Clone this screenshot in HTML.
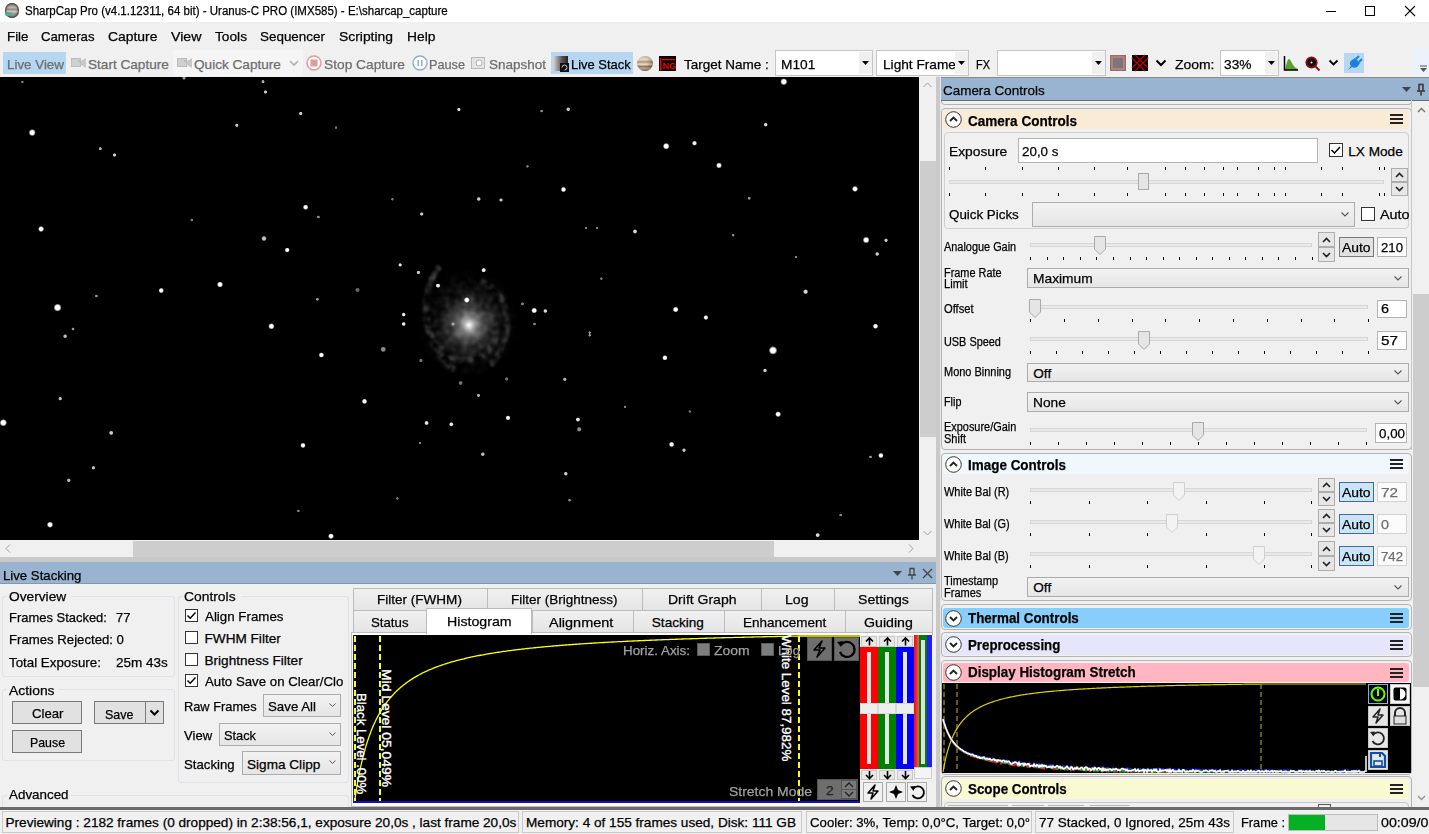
<!DOCTYPE html>
<html><head><meta charset="utf-8">
<style>
*{box-sizing:border-box;margin:0;padding:0}
html,body{width:1429px;height:834px;overflow:hidden;background:#f0f0f0;font-family:"Liberation Sans",sans-serif;color:#000;position:relative}
.a{position:absolute}
.t{position:absolute;white-space:nowrap;line-height:1;-webkit-text-stroke:0.25px currentColor}
svg{overflow:visible}
</style></head><body>
<div class="a" style="left:0px;top:0px;width:1429px;height:22px;background:#fff"></div>
<div class="a" style="left:4.5px;top:3px;width:14.5px;height:14.5px;border-radius:50%;background:linear-gradient(180deg,#8a8580 0%,#b9b4ae 30%,#9c8a78 45%,#c9ccd4 55%,#a89c8e 70%,#8a8078 100%);box-shadow:inset 0 0 2px 1px #3a3530"></div>
<div class="a" style="left:5px;top:12px;width:7px;height:4px;background:#3fb0a0;border-radius:2px;opacity:.9"></div>
<div class="t" style="left:25.0px;top:5.12px;font-size:12.5px;color:#000;transform:scaleX(0.921);transform-origin:0 0;">SharpCap Pro (v4.1.12311, 64 bit) - Uranus-C PRO (IMX585) - E:\sharcap_capture</div>
<div class="a" style="left:1326px;top:11px;width:10px;height:1px;background:#000"></div>
<div class="a" style="left:1365px;top:6px;width:10px;height:10px;border:1px solid #000"></div>
<svg class="a" style="left:1404px;top:5px" width="12" height="12"><path d="M1 1L11 11M11 1L1 11" stroke="#000" stroke-width="1.1"/></svg>
<div class="t" style="left:6.5px;top:30.39px;font-size:13.6px;color:#000;transform:scaleX(0.981);transform-origin:0 0;">File</div>
<div class="t" style="left:40.5px;top:30.39px;font-size:13.6px;color:#000;transform:scaleX(0.970);transform-origin:0 0;">Cameras</div>
<div class="t" style="left:107.5px;top:30.39px;font-size:13.6px;color:#000;transform:scaleX(1.023);transform-origin:0 0;">Capture</div>
<div class="t" style="left:170.5px;top:30.39px;font-size:13.6px;color:#000;transform:scaleX(1.043);transform-origin:0 0;">View</div>
<div class="t" style="left:214.5px;top:30.39px;font-size:13.6px;color:#000;transform:scaleX(1.008);transform-origin:0 0;">Tools</div>
<div class="t" style="left:260.0px;top:30.39px;font-size:13.6px;color:#000;transform:scaleX(0.988);transform-origin:0 0;">Sequencer</div>
<div class="t" style="left:338.5px;top:30.39px;font-size:13.6px;color:#000;transform:scaleX(1.021);transform-origin:0 0;">Scripting</div>
<div class="t" style="left:407.3px;top:30.39px;font-size:13.6px;color:#000;transform:scaleX(1.015);transform-origin:0 0;">Help</div>
<div class="a" style="left:3px;top:52px;width:63px;height:22px;background:#b6d6f2"></div>
<div class="t" style="left:7.0px;top:57.89px;font-size:13.6px;color:#6d6d6d;transform:scaleX(0.983);transform-origin:0 0;">Live View</div>
<div class="a" style="left:71px;top:58px;width:10px;height:9px;background:#d0d0d0;border:1px solid #bdbdbd"></div>
<svg class="a" style="left:81px;top:58px" width="6" height="10"><path d="M0 3L5 0V10L0 7Z" fill="#c8c8c8"/></svg>
<div class="a" style="left:78px;top:60px;width:2px;height:2px;background:#9fd49f"></div>
<div class="t" style="left:88.0px;top:57.89px;font-size:13.6px;color:#6d6d6d;">Start Capture</div>
<div class="a" style="left:173px;top:50px;width:130px;height:26px;background:#f5f5f5"></div>
<div class="a" style="left:177px;top:58px;width:10px;height:9px;background:#d0d0d0;border:1px solid #bdbdbd"></div>
<svg class="a" style="left:187px;top:58px" width="6" height="10"><path d="M0 3L5 0V10L0 7Z" fill="#c8c8c8"/></svg>
<div class="a" style="left:184px;top:60px;width:2px;height:2px;background:#9fd49f"></div>
<div class="t" style="left:194.0px;top:57.89px;font-size:13.6px;color:#6d6d6d;">Quick Capture</div>
<svg class="a" style="left:289px;top:60px" width="10" height="6"><path d="M1 1L5 5L9 1" stroke="#b0b0b0" stroke-width="1.6" fill="none"/></svg>
<svg class="a" style="left:306px;top:55px" width="16" height="16"><circle cx="8" cy="8" r="7" fill="#fff" stroke="#e39a9a" stroke-width="1.5"/><rect x="4.5" y="4.5" width="7" height="7" fill="#e39a9a"/></svg>
<div class="t" style="left:324.0px;top:57.89px;font-size:13.6px;color:#6d6d6d;transform:scaleX(1.011);transform-origin:0 0;">Stop Capture</div>
<svg class="a" style="left:412px;top:55px" width="16" height="16"><circle cx="8" cy="8" r="7" fill="#fff" stroke="#8eaad8" stroke-width="1.3"/><rect x="5.5" y="5" width="1.5" height="6" fill="#8eaad8"/><rect x="9" y="5" width="1.5" height="6" fill="#8eaad8"/></svg>
<div class="t" style="left:429.0px;top:57.89px;font-size:13.6px;color:#6d6d6d;transform:scaleX(0.934);transform-origin:0 0;">Pause</div>
<svg class="a" style="left:471px;top:56px" width="15" height="14"><rect x="0.5" y="1.5" width="13" height="11" fill="#e4e4e4" stroke="#b9b9b9"/><circle cx="8" cy="7" r="3" fill="#fff" stroke="#b0b0b0"/></svg>
<div class="t" style="left:489.0px;top:57.89px;font-size:13.6px;color:#6d6d6d;transform:scaleX(0.992);transform-origin:0 0;">Snapshot</div>
<div class="a" style="left:551px;top:52px;width:82px;height:22px;background:#b6d6f2"></div>
<div class="a" style="left:553px;top:56px;width:15px;height:15px;background:linear-gradient(90deg,#d8d8d8,#555 60%,#222)"></div>
<div class="a" style="left:560px;top:63px;width:9px;height:9px;background:#111"></div>
<svg class="a" style="left:561px;top:64px" width="7" height="7"><path d="M1 3.5A2.5 2.5 0 1 1 3.5 6" stroke="#ccc" fill="none" stroke-width="1"/></svg>
<div class="t" style="left:571.0px;top:57.89px;font-size:13.6px;color:#000;transform:scaleX(0.952);transform-origin:0 0;">Live Stack</div>
<div class="a" style="left:637px;top:56px;width:16px;height:15px;border-radius:50%;background:linear-gradient(180deg,#c9c3bb 0%,#e9d8c4 25%,#b69170 40%,#efe6da 55%,#a8845f 70%,#d9cfc2 85%,#8a7d70 100%);box-shadow:inset -2px -2px 4px rgba(0,0,0,.35)"></div>
<svg class="a" style="left:659px;top:56px" width="17" height="15"><rect width="17" height="15" fill="#000"/><rect x="1" y="2" width="1.5" height="13" fill="#e00"/><rect x="3" y="3" width="13" height="1.3" fill="#e00"/><text x="3.5" y="13" font-family="Liberation Sans" font-weight="bold" font-size="9" fill="#e00">NG</text></svg>
<div class="t" style="left:683.6px;top:57.89px;font-size:13.6px;color:#000;transform:scaleX(0.993);transform-origin:0 0;">Target Name :</div>
<div class="a" style="left:775px;top:50px;width:98px;height:26px;background:#fff;border:1px solid #c5c5c5"></div>
<div class="a" style="left:859px;top:52px;width:13px;height:22px;background:#f0f0f0"></div>
<svg class="a" style="left:862px;top:61px" width="7" height="4"><path d="M0 0H7L3.5 4Z" fill="#000"/></svg>
<div class="t" style="left:781.0px;top:57.89px;font-size:13.6px;color:#000;transform:scaleX(1.011);transform-origin:0 0;">M101</div>
<div class="a" style="left:876px;top:50px;width:93px;height:26px;background:#fff;border:1px solid #c5c5c5"></div>
<div class="t" style="left:883.0px;top:57.89px;font-size:13.6px;color:#000;transform:scaleX(1.006);transform-origin:0 0;clip-path:inset(-5px 1px -5px 0)">Light Frame</div>
<div class="a" style="left:955px;top:52px;width:13px;height:22px;background:#f0f0f0"></div>
<svg class="a" style="left:958px;top:61px" width="7" height="4"><path d="M0 0H7L3.5 4Z" fill="#000"/></svg>
<div class="t" style="left:975.8px;top:57.89px;font-size:13.6px;color:#000;transform:scaleX(0.806);transform-origin:0 0;">FX</div>
<div class="a" style="left:997px;top:50px;width:108.5px;height:26px;background:#fff;border:1px solid #c5c5c5"></div>
<div class="a" style="left:1091.5px;top:52px;width:13px;height:22px;background:#f0f0f0"></div>
<svg class="a" style="left:1094.5px;top:61px" width="7" height="4"><path d="M0 0H7L3.5 4Z" fill="#000"/></svg>
<svg class="a" style="left:1110px;top:55px" width="16" height="16"><rect width="16" height="16" fill="#787878"/><rect x="2" y="2" width="12" height="12" fill="none" stroke="#f07a7a" stroke-width="1.2"/><path d="M5 3.5H11L12.5 5V11L11 12.5H5L3.5 11V5Z" fill="#787878"/></svg>
<svg class="a" style="left:1132px;top:55px" width="16" height="16"><rect width="16" height="16" fill="#000"/><path d="M3 0L16 13M0 3L13 16M13 0L0 13M16 3L3 16" stroke="#c00000" stroke-width="1.3"/></svg>
<svg class="a" style="left:1156px;top:60px" width="10" height="6"><path d="M0.5 0.5L5 5L9.5 0.5" stroke="#000" stroke-width="2" fill="none"/></svg>
<div class="t" style="left:1174.7px;top:57.89px;font-size:13.6px;color:#000;transform:scaleX(1.025);transform-origin:0 0;">Zoom:</div>
<div class="a" style="left:1220px;top:50px;width:58.5px;height:26px;background:#fff;border:1px solid #c5c5c5"></div>
<div class="a" style="left:1264.5px;top:52px;width:13px;height:22px;background:#f0f0f0"></div>
<svg class="a" style="left:1267.5px;top:61px" width="7" height="4"><path d="M0 0H7L3.5 4Z" fill="#000"/></svg>
<div class="t" style="left:1223.5px;top:57.89px;font-size:13.6px;color:#000;transform:scaleX(1.010);transform-origin:0 0;">33%</div>
<svg class="a" style="left:1283px;top:56px" width="16" height="15"><path d="M2 14C4 5 5 3 6 3C8 3 10 12 15 13V14Z" fill="#5aa02c"/><path d="M1.5 0V14H15" stroke="#000" stroke-width="1.5" fill="none"/></svg>
<svg class="a" style="left:1305px;top:56px" width="16" height="15"><circle cx="6.5" cy="6.5" r="5.2" fill="#111" stroke="#8b1010" stroke-width="1.8"/><circle cx="6.5" cy="6.5" r="1" fill="#fff"/><path d="M10 10L14.5 14.5" stroke="#8b1010" stroke-width="2"/></svg>
<svg class="a" style="left:1329px;top:60px" width="9" height="6"><path d="M0.5 0.5L4.5 4.5L8.5 0.5" stroke="#000" stroke-width="1.8" fill="none"/></svg>
<div class="a" style="left:1344px;top:53px;width:20px;height:20px;background:#b6d6f2"></div>
<svg class="a" style="left:1346px;top:55px" width="17" height="16"><path d="M2 15L5 11C3 9 4 6 6 5L9 3L14 8L12 11C11 13 8 13 6 12Z" fill="#1e7fe0"/><path d="M10 4L13 1M13 7L16 4" stroke="#1e7fe0" stroke-width="2"/></svg>
<div class="a" style="left:1414px;top:49px;width:15px;height:27px;background:#e9f1fa"></div>
<svg class="a" style="left:1419px;top:65px" width="9" height="8"><path d="M1 1H8" stroke="#555" stroke-width="1"/><path d="M1 3H8L4.5 7Z" fill="#555"/></svg>
<div class="a" style="left:0px;top:77px;width:919px;height:463px;background:#000"></div>
<svg class="a" style="left:0;top:77px" width="919" height="463" viewBox="0 77 919 463"><defs><radialGradient id="sg"><stop offset="0" stop-color="#fff"/><stop offset="0.55" stop-color="#fff"/><stop offset="1" stop-color="#fff" stop-opacity="0"/></radialGradient><radialGradient id="gx"><stop offset="0" stop-color="#fff" stop-opacity="1"/><stop offset="0.06" stop-color="#e8e8e8" stop-opacity="0.9"/><stop offset="0.2" stop-color="#aaa" stop-opacity="0.55"/><stop offset="0.5" stop-color="#777" stop-opacity="0.25"/><stop offset="1" stop-color="#555" stop-opacity="0"/></radialGradient><filter id="bl"><feGaussianBlur stdDeviation="4"/></filter></defs><defs><radialGradient id="core"><stop offset="0" stop-color="#fff" stop-opacity="1"/><stop offset="0.07" stop-color="#e0e0e0" stop-opacity="0.95"/><stop offset="0.28" stop-color="#959595" stop-opacity="0.6"/><stop offset="0.6" stop-color="#656565" stop-opacity="0.28"/><stop offset="1" stop-color="#444" stop-opacity="0"/></radialGradient><radialGradient id="disk"><stop offset="0" stop-color="#c0c0c0" stop-opacity="1"/><stop offset="0.35" stop-color="#8a8a8a" stop-opacity="0.75"/><stop offset="0.7" stop-color="#5a5a5a" stop-opacity="0.35"/><stop offset="1" stop-color="#404040" stop-opacity="0"/></radialGradient><filter id="bl3" x="-50%" y="-50%" width="200%" height="200%"><feGaussianBlur stdDeviation="3"/></filter><filter id="mot" x="-20%" y="-20%" width="140%" height="140%"><feTurbulence type="fractalNoise" baseFrequency="0.16" numOctaves="2" seed="11" result="n"/><feColorMatrix in="n" type="matrix" values="0 0 0 0 1 0 0 0 0 1 0 0 0 0 1 0 0 0 2.0 -0.6" result="m"/><feComposite in="SourceGraphic" in2="m" operator="in" result="c"/><feGaussianBlur in="c" stdDeviation="0.9"/></filter></defs><g filter="url(#mot)" opacity="0.7"><ellipse cx="468" cy="323" rx="52" ry="56" fill="url(#disk)"/><g stroke="#6e6e6e" stroke-width="7" fill="none" transform="translate(469 325) scale(0.85) translate(-469 -325)"><path d="M434 256C420 275 416 300 420 325C424 345 440 362 458 366C478 368 496 358 500 340C502 322 494 306 482 300C472 295 462 298 458 306"/><path d="M483 274C500 280 512 295 514 318C514 340 506 360 494 372"/><path d="M424 340C430 356 440 370 452 378"/></g></g><circle cx="469" cy="325" r="36" fill="url(#core)"/><circle cx="32.2" cy="132.6" r="3.6" fill="url(#sg)" opacity="1.00"/><circle cx="41.1" cy="229" r="3.1" fill="url(#sg)" opacity="1.00"/><circle cx="57.6" cy="307.6" r="4.1" fill="url(#sg)" opacity="1.00"/><circle cx="100.3" cy="148.7" r="1.9" fill="url(#sg)" opacity="0.70"/><circle cx="114.5" cy="155" r="2.1" fill="url(#sg)" opacity="0.80"/><circle cx="161.2" cy="290.5" r="2.8" fill="url(#sg)" opacity="1.00"/><circle cx="220" cy="284.5" r="3.1" fill="url(#sg)" opacity="1.00"/><circle cx="236.8" cy="125.3" r="2.0" fill="url(#sg)" opacity="0.80"/><circle cx="264" cy="238.5" r="2.8" fill="url(#sg)" opacity="0.75"/><circle cx="287.2" cy="250" r="2.6" fill="url(#sg)" opacity="1.00"/><circle cx="300.7" cy="113.5" r="2.1" fill="url(#sg)" opacity="0.80"/><circle cx="305.6" cy="207.2" r="2.8" fill="url(#sg)" opacity="1.00"/><circle cx="458.9" cy="109.5" r="2.1" fill="url(#sg)" opacity="0.85"/><circle cx="421.7" cy="214" r="2.1" fill="url(#sg)" opacity="0.80"/><circle cx="418.4" cy="272.4" r="2.1" fill="url(#sg)" opacity="0.80"/><circle cx="263" cy="81.6" r="1.9" fill="url(#sg)" opacity="0.70"/><circle cx="265.5" cy="92" r="2.1" fill="url(#sg)" opacity="0.75"/><circle cx="184" cy="78" r="2.1" fill="url(#sg)" opacity="0.60"/><circle cx="392.4" cy="199.3" r="1.6" fill="url(#sg)" opacity="0.50"/><circle cx="318.4" cy="217" r="1.8" fill="url(#sg)" opacity="0.55"/><circle cx="191.8" cy="220" r="1.8" fill="url(#sg)" opacity="0.50"/><circle cx="336" cy="127.6" r="1.6" fill="url(#sg)" opacity="0.50"/><circle cx="400" cy="264.8" r="1.8" fill="url(#sg)" opacity="0.60"/><circle cx="437.5" cy="285.5" r="2.1" fill="url(#sg)" opacity="0.60"/><circle cx="317.4" cy="299.3" r="1.8" fill="url(#sg)" opacity="0.60"/><circle cx="96.4" cy="296" r="1.8" fill="url(#sg)" opacity="0.55"/><circle cx="22.4" cy="82" r="1.6" fill="url(#sg)" opacity="0.50"/><circle cx="783.8" cy="81.7" r="3.6" fill="url(#sg)" opacity="1.00"/><circle cx="765.7" cy="124.7" r="2.2" fill="url(#sg)" opacity="0.85"/><circle cx="666.2" cy="146.2" r="3.4" fill="url(#sg)" opacity="1.00"/><circle cx="694.5" cy="143.2" r="2.6" fill="url(#sg)" opacity="0.95"/><circle cx="719" cy="165.4" r="3.0" fill="url(#sg)" opacity="1.00"/><circle cx="855" cy="188.9" r="3.1" fill="url(#sg)" opacity="1.00"/><circle cx="563.5" cy="189.5" r="2.8" fill="url(#sg)" opacity="1.00"/><circle cx="478.8" cy="199" r="2.2" fill="url(#sg)" opacity="0.80"/><circle cx="501" cy="200" r="2.1" fill="url(#sg)" opacity="0.75"/><circle cx="568.2" cy="109.3" r="2.2" fill="url(#sg)" opacity="0.80"/><circle cx="541.6" cy="111" r="1.7" fill="url(#sg)" opacity="0.55"/><circle cx="749.2" cy="198.3" r="1.8" fill="url(#sg)" opacity="0.60"/><circle cx="635" cy="231.5" r="2.4" fill="url(#sg)" opacity="0.85"/><circle cx="866.1" cy="240" r="3.4" fill="url(#sg)" opacity="1.00"/><circle cx="886" cy="240.3" r="2.1" fill="url(#sg)" opacity="0.80"/><circle cx="877.2" cy="254" r="2.2" fill="url(#sg)" opacity="0.80"/><circle cx="733.1" cy="235.2" r="1.7" fill="url(#sg)" opacity="0.55"/><circle cx="805.6" cy="291.7" r="2.6" fill="url(#sg)" opacity="0.85"/><circle cx="675.7" cy="309.5" r="3.0" fill="url(#sg)" opacity="1.00"/><circle cx="705.9" cy="317.5" r="2.6" fill="url(#sg)" opacity="0.95"/><circle cx="534.2" cy="310.5" r="3.0" fill="url(#sg)" opacity="1.00"/><circle cx="545.3" cy="311" r="2.2" fill="url(#sg)" opacity="0.85"/><circle cx="483.8" cy="270" r="2.2" fill="url(#sg)" opacity="0.75"/><circle cx="796" cy="257" r="1.6" fill="url(#sg)" opacity="0.50"/><circle cx="601.4" cy="278.6" r="1.6" fill="url(#sg)" opacity="0.50"/><circle cx="586" cy="228" r="1.6" fill="url(#sg)" opacity="0.50"/><circle cx="597" cy="228" r="1.6" fill="url(#sg)" opacity="0.50"/><circle cx="527.5" cy="166.4" r="1.6" fill="url(#sg)" opacity="0.50"/><circle cx="271.4" cy="326.3" r="3.2" fill="url(#sg)" opacity="1.00"/><circle cx="321.4" cy="355" r="2.8" fill="url(#sg)" opacity="1.00"/><circle cx="364.5" cy="401.3" r="2.8" fill="url(#sg)" opacity="1.00"/><circle cx="3.3" cy="422.7" r="3.8" fill="url(#sg)" opacity="1.00"/><circle cx="111.2" cy="432.9" r="2.4" fill="url(#sg)" opacity="0.80"/><circle cx="303" cy="445.4" r="2.8" fill="url(#sg)" opacity="1.00"/><circle cx="50" cy="524.7" r="3.2" fill="url(#sg)" opacity="1.00"/><circle cx="331" cy="536.2" r="3.0" fill="url(#sg)" opacity="1.00"/><circle cx="426.6" cy="423" r="2.4" fill="url(#sg)" opacity="0.90"/><circle cx="451.3" cy="424.3" r="2.4" fill="url(#sg)" opacity="0.90"/><circle cx="383.2" cy="349.3" r="3.0" fill="url(#sg)" opacity="0.55"/><circle cx="357.5" cy="290" r="2.6" fill="url(#sg)" opacity="0.40"/><circle cx="73" cy="329" r="1.8" fill="url(#sg)" opacity="0.60"/><circle cx="65.1" cy="336.2" r="2.2" fill="url(#sg)" opacity="0.75"/><circle cx="60.2" cy="398.7" r="2.1" fill="url(#sg)" opacity="0.75"/><circle cx="93.4" cy="467.8" r="2.1" fill="url(#sg)" opacity="0.75"/><circle cx="68.8" cy="480.3" r="2.1" fill="url(#sg)" opacity="0.75"/><circle cx="420" cy="443" r="1.6" fill="url(#sg)" opacity="0.50"/><circle cx="404" cy="314.8" r="1.9" fill="url(#sg)" opacity="0.60"/><circle cx="404" cy="324" r="1.9" fill="url(#sg)" opacity="0.60"/><circle cx="298.4" cy="510.9" r="1.7" fill="url(#sg)" opacity="0.50"/><circle cx="397.4" cy="498.4" r="1.6" fill="url(#sg)" opacity="0.50"/><circle cx="773" cy="350.4" r="4.4" fill="url(#sg)" opacity="1.00"/><circle cx="875.5" cy="326.2" r="2.8" fill="url(#sg)" opacity="1.00"/><circle cx="664.9" cy="357.8" r="2.8" fill="url(#sg)" opacity="1.00"/><circle cx="765" cy="370.5" r="2.2" fill="url(#sg)" opacity="0.80"/><circle cx="778.1" cy="414.2" r="3.0" fill="url(#sg)" opacity="1.00"/><circle cx="671.6" cy="444.4" r="2.8" fill="url(#sg)" opacity="1.00"/><circle cx="684" cy="450.2" r="2.1" fill="url(#sg)" opacity="0.80"/><circle cx="880.9" cy="455.5" r="2.8" fill="url(#sg)" opacity="1.00"/><circle cx="870.5" cy="456.9" r="1.7" fill="url(#sg)" opacity="0.60"/><circle cx="508" cy="417.9" r="2.6" fill="url(#sg)" opacity="0.95"/><circle cx="577.9" cy="419.6" r="2.4" fill="url(#sg)" opacity="0.90"/><circle cx="579.2" cy="429.3" r="2.6" fill="url(#sg)" opacity="0.55"/><circle cx="482.8" cy="454.2" r="2.2" fill="url(#sg)" opacity="0.75"/><circle cx="565.8" cy="473.7" r="2.2" fill="url(#sg)" opacity="0.80"/><circle cx="817.7" cy="535.1" r="2.4" fill="url(#sg)" opacity="0.85"/><circle cx="589.7" cy="332.6" r="1.6" fill="url(#sg)" opacity="0.60"/><circle cx="589.7" cy="335.3" r="1.6" fill="url(#sg)" opacity="0.60"/><circle cx="564.8" cy="379.3" r="2.1" fill="url(#sg)" opacity="0.70"/><circle cx="478.5" cy="395.4" r="1.9" fill="url(#sg)" opacity="0.70"/><circle cx="438.2" cy="285.7" r="2.4" fill="url(#sg)" opacity="0.85"/><circle cx="483.6" cy="270.3" r="2.4" fill="url(#sg)" opacity="0.80"/><circle cx="403.6" cy="314.5" r="2.2" fill="url(#sg)" opacity="0.80"/><circle cx="403.6" cy="324" r="2.2" fill="url(#sg)" opacity="0.80"/><circle cx="453" cy="324" r="2.1" fill="url(#sg)" opacity="0.50"/><circle cx="522.4" cy="303.9" r="1.9" fill="url(#sg)" opacity="0.50"/><circle cx="534.5" cy="324" r="1.8" fill="url(#sg)" opacity="0.50"/><circle cx="420.9" cy="360.5" r="2.1" fill="url(#sg)" opacity="0.45"/><circle cx="460.6" cy="383" r="2.4" fill="url(#sg)" opacity="0.45"/><circle cx="506.7" cy="379" r="2.1" fill="url(#sg)" opacity="0.45"/><circle cx="400.2" cy="265" r="2.0" fill="url(#sg)" opacity="0.75"/><circle cx="569.5" cy="500.2" r="1.7" fill="url(#sg)" opacity="0.55"/><circle cx="840.6" cy="515" r="1.7" fill="url(#sg)" opacity="0.55"/><circle cx="689.8" cy="411.5" r="1.6" fill="url(#sg)" opacity="0.50"/><circle cx="625" cy="406.8" r="1.6" fill="url(#sg)" opacity="0.50"/><circle cx="466.8" cy="300" r="3" fill="url(#sg)"/></svg>
<div class="a" style="left:919px;top:77px;width:17px;height:463px;background:#f0f0f0"></div>
<div class="a" style="left:920px;top:161px;width:16px;height:276px;background:#cdcdcd"></div>
<svg class="a" style="left:923px;top:82px" width="9" height="6"><path d="M0.5 5L4.5 1L8.5 5" stroke="#a0a0a0" stroke-width="1" fill="none"/></svg>
<svg class="a" style="left:923px;top:530px" width="9" height="6"><path d="M0.5 1L4.5 5L8.5 1" stroke="#a0a0a0" stroke-width="1" fill="none"/></svg>
<div class="a" style="left:0px;top:540px;width:936px;height:17px;background:#f0f0f0"></div>
<div class="a" style="left:133px;top:541px;width:641px;height:16px;background:#cdcdcd"></div>
<svg class="a" style="left:5px;top:544px" width="6" height="9"><path d="M5 0.5L1 4.5L5 8.5" stroke="#a0a0a0" stroke-width="1" fill="none"/></svg>
<svg class="a" style="left:908px;top:544px" width="6" height="9"><path d="M1 0.5L5 4.5L1 8.5" stroke="#a0a0a0" stroke-width="1" fill="none"/></svg>
<div class="a" style="left:0px;top:557px;width:936px;height:5px;background:#c9c9c9"></div>
<div class="a" style="left:0px;top:562px;width:936px;height:22px;background:#99b4d1"></div>
<div class="a" style="left:0px;top:583px;width:936px;height:1px;background:#8497ae"></div>
<div class="t" style="left:2.5px;top:568.89px;font-size:13.6px;color:#000;transform:scaleX(0.970);transform-origin:0 0;">Live Stacking</div>
<svg class="a" style="left:893px;top:571px" width="9" height="5"><path d="M0 0H9L4.5 5Z" fill="#444"/></svg>
<svg class="a" style="left:907px;top:567px" width="10" height="13"><path d="M2.5 1.5H7.5M3 1.5V8M7 1.5V8M1 8H9M5 8V12.5" stroke="#444" stroke-width="1.3" fill="none"/></svg>
<svg class="a" style="left:922px;top:568px" width="11" height="11"><path d="M1 1L10 10M10 1L1 10" stroke="#444" stroke-width="1.3"/></svg>
<div class="a" style="left:0px;top:584px;width:936px;height:223px;background:#f0f0f0"></div>
<div class="a" style="left:2px;top:596px;width:173px;height:81px;border:1px solid #dde3e9;border-radius:3px"></div>
<div class="a" style="left:7px;top:592px;width:63px;height:8px;background:#f0f0f0"></div>
<div class="t" style="left:8.8px;top:589.99px;font-size:13.6px;color:#000;transform:scaleX(1.009);transform-origin:0 0;">Overview</div>
<div class="t" style="left:8.5px;top:611.19px;font-size:13.6px;color:#000;transform:scaleX(0.953);transform-origin:0 0;">Frames Stacked:</div>
<div class="t" style="left:115.7px;top:611.19px;font-size:13.6px;color:#000;transform:scaleX(0.945);transform-origin:0 0;">77</div>
<div class="t" style="left:8.5px;top:633.39px;font-size:13.6px;color:#000;transform:scaleX(0.969);transform-origin:0 0;">Frames Rejected: 0</div>
<div class="t" style="left:8.5px;top:656.39px;font-size:13.6px;color:#000;transform:scaleX(0.981);transform-origin:0 0;">Total Exposure:</div>
<div class="t" style="left:115.7px;top:656.39px;font-size:13.6px;color:#000;transform:scaleX(0.993);transform-origin:0 0;">25m 43s</div>
<div class="a" style="left:2px;top:689px;width:173px;height:72px;border:1px solid #dde3e9;border-radius:3px"></div>
<div class="a" style="left:7px;top:685px;width:52px;height:8px;background:#f0f0f0"></div>
<div class="t" style="left:9.0px;top:683.99px;font-size:13.6px;color:#000;transform:scaleX(1.022);transform-origin:0 0;">Actions</div>
<div class="a" style="left:12px;top:701px;width:70px;height:23px;background:#e1e1e1;border:1px solid #7a7a7a"></div>
<div class="t" style="left:32.0px;top:707.39px;font-size:13.6px;color:#000;transform:scaleX(0.969);transform-origin:0 0;">Clear</div>
<div class="a" style="left:94px;top:701px;width:52px;height:23px;background:#e1e1e1;border:1px solid #7a7a7a"></div>
<div class="t" style="left:104.5px;top:707.89px;font-size:13.6px;color:#000;transform:scaleX(0.919);transform-origin:0 0;">Save</div>
<div class="a" style="left:145px;top:701px;width:19px;height:23px;background:#e1e1e1;border:1px solid #7a7a7a"></div>
<svg class="a" style="left:150px;top:710px" width="9" height="6"><path d="M0.5 0.5L4.5 4.5L8.5 0.5" stroke="#000" stroke-width="2" fill="none"/></svg>
<div class="a" style="left:12px;top:730px;width:70px;height:23px;background:#e1e1e1;border:1px solid #7a7a7a"></div>
<div class="t" style="left:29.5px;top:736.39px;font-size:13.6px;color:#000;transform:scaleX(0.908);transform-origin:0 0;">Pause</div>
<div class="a" style="left:178px;top:596px;width:171px;height:187px;border:1px solid #dde3e9;border-radius:3px"></div>
<div class="a" style="left:183px;top:592px;width:58px;height:8px;background:#f0f0f0"></div>
<div class="t" style="left:184.4px;top:589.99px;font-size:13.6px;color:#000;transform:scaleX(1.019);transform-origin:0 0;">Controls</div>
<div class="a" style="left:185px;top:609px;width:13px;height:13px;background:#fff;border:1px solid #333"></div>
<svg class="a" style="left:185px;top:609px" width="13" height="13"><path d="M2.5 6.5L5.2 9.2L10.5 3.5" stroke="#000" stroke-width="1.5" fill="none"/></svg>
<div class="t" style="left:204.5px;top:610.19px;font-size:13.6px;color:#000;transform:scaleX(0.980);transform-origin:0 0;clip-path:inset(-4px 0 -4px 0)">Align Frames</div>
<div class="a" style="left:185px;top:631px;width:13px;height:13px;background:#fff;border:1px solid #333"></div>
<div class="t" style="left:204.5px;top:632.09px;font-size:13.6px;color:#000;clip-path:inset(-4px 0 -4px 0)">FWHM Filter</div>
<div class="a" style="left:185px;top:653px;width:13px;height:13px;background:#fff;border:1px solid #333"></div>
<div class="t" style="left:204.5px;top:653.59px;font-size:13.6px;color:#000;clip-path:inset(-4px 0 -4px 0)">Brightness Filter</div>
<div class="a" style="left:185px;top:674px;width:13px;height:13px;background:#fff;border:1px solid #333"></div>
<svg class="a" style="left:185px;top:674px" width="13" height="13"><path d="M2.5 6.5L5.2 9.2L10.5 3.5" stroke="#000" stroke-width="1.5" fill="none"/></svg>
<div class="t" style="left:204.5px;top:675.39px;font-size:13.6px;color:#000;transform:scaleX(0.974);transform-origin:0 0;clip-path:inset(-4px 0 -4px 0)">Auto Save on Clear/Clo</div>
<div class="t" style="left:184.4px;top:700.39px;font-size:13.6px;color:#000;transform:scaleX(0.942);transform-origin:0 0;">Raw Frames</div>
<div class="a" style="left:263px;top:694px;width:78px;height:23px;background:linear-gradient(#f2f2f2,#e5e5e5);border:1px solid #acacac"></div>
<svg class="a" style="left:329px;top:702.5px" width="7" height="4"><path d="M0.5 0.5L3.5 3.5L6.5 0.5" stroke="#555" stroke-width="1" fill="none"/></svg>
<div class="t" style="left:268.0px;top:700.39px;font-size:13.6px;color:#000;transform:scaleX(0.977);transform-origin:0 0;">Save All</div>
<div class="t" style="left:184.4px;top:729.39px;font-size:13.6px;color:#000;transform:scaleX(0.961);transform-origin:0 0;">View</div>
<div class="a" style="left:219px;top:723px;width:122px;height:23px;background:linear-gradient(#f2f2f2,#e5e5e5);border:1px solid #acacac"></div>
<svg class="a" style="left:329px;top:731.5px" width="7" height="4"><path d="M0.5 0.5L3.5 3.5L6.5 0.5" stroke="#555" stroke-width="1" fill="none"/></svg>
<div class="t" style="left:224.0px;top:729.39px;font-size:13.6px;color:#000;transform:scaleX(0.941);transform-origin:0 0;">Stack</div>
<div class="t" style="left:184.4px;top:757.89px;font-size:13.6px;color:#000;transform:scaleX(0.970);transform-origin:0 0;">Stacking</div>
<div class="a" style="left:242px;top:751px;width:99px;height:24px;background:linear-gradient(#f2f2f2,#e5e5e5);border:1px solid #acacac"></div>
<svg class="a" style="left:329px;top:760.0px" width="7" height="4"><path d="M0.5 0.5L3.5 3.5L6.5 0.5" stroke="#555" stroke-width="1" fill="none"/></svg>
<div class="t" style="left:247.0px;top:757.89px;font-size:13.6px;color:#000;">Sigma Clipp</div>
<div class="a" style="left:2px;top:795px;width:347px;height:20px;border:1px solid #dde3e9;border-radius:3px"></div>
<div class="a" style="left:7px;top:790px;width:62px;height:10px;background:#f0f0f0"></div>
<div class="t" style="left:9.4px;top:788.39px;font-size:13.6px;color:#000;transform:scaleX(0.985);transform-origin:0 0;">Advanced</div>
<div class="a" style="left:353px;top:588px;width:135px;height:23px;background:linear-gradient(#f0f0f0,#e5e5e5);border:1px solid #bcbcbc"></div>
<div class="t" style="left:376.8px;top:593.39px;font-size:13.6px;color:#000;transform:scaleX(0.995);transform-origin:0 0;">Filter (FWHM)</div>
<div class="a" style="left:487px;top:588px;width:156px;height:23px;background:linear-gradient(#f0f0f0,#e5e5e5);border:1px solid #bcbcbc"></div>
<div class="t" style="left:511.2px;top:593.39px;font-size:13.6px;color:#000;transform:scaleX(0.994);transform-origin:0 0;">Filter (Brightness)</div>
<div class="a" style="left:642px;top:588px;width:120px;height:23px;background:linear-gradient(#f0f0f0,#e5e5e5);border:1px solid #bcbcbc"></div>
<div class="t" style="left:667.8px;top:593.39px;font-size:13.6px;color:#000;transform:scaleX(1.030);transform-origin:0 0;">Drift Graph</div>
<div class="a" style="left:761px;top:588px;width:74px;height:23px;background:linear-gradient(#f0f0f0,#e5e5e5);border:1px solid #bcbcbc"></div>
<div class="t" style="left:785.3px;top:593.39px;font-size:13.6px;color:#000;transform:scaleX(1.040);transform-origin:0 0;">Log</div>
<div class="a" style="left:834px;top:588px;width:99px;height:23px;background:linear-gradient(#f0f0f0,#e5e5e5);border:1px solid #bcbcbc"></div>
<div class="t" style="left:857.5px;top:593.39px;font-size:13.6px;color:#000;transform:scaleX(1.036);transform-origin:0 0;">Settings</div>
<div class="a" style="left:353px;top:610px;width:74px;height:23px;background:linear-gradient(#f0f0f0,#e5e5e5);border:1px solid #bcbcbc"></div>
<div class="t" style="left:370.5px;top:615.99px;font-size:13.6px;color:#000;transform:scaleX(0.973);transform-origin:0 0;">Status</div>
<div class="a" style="left:532px;top:610px;width:102px;height:23px;background:linear-gradient(#f0f0f0,#e5e5e5);border:1px solid #bcbcbc"></div>
<div class="t" style="left:549.4px;top:615.99px;font-size:13.6px;color:#000;transform:scaleX(1.063);transform-origin:0 0;">Alignment</div>
<div class="a" style="left:633px;top:610px;width:92px;height:23px;background:linear-gradient(#f0f0f0,#e5e5e5);border:1px solid #bcbcbc"></div>
<div class="t" style="left:651.8px;top:615.99px;font-size:13.6px;color:#000;">Stacking</div>
<div class="a" style="left:724px;top:610px;width:122px;height:23px;background:linear-gradient(#f0f0f0,#e5e5e5);border:1px solid #bcbcbc"></div>
<div class="t" style="left:742.5px;top:615.99px;font-size:13.6px;color:#000;transform:scaleX(0.991);transform-origin:0 0;">Enhancement</div>
<div class="a" style="left:845px;top:610px;width:88px;height:23px;background:linear-gradient(#f0f0f0,#e5e5e5);border:1px solid #bcbcbc"></div>
<div class="t" style="left:864.2px;top:615.99px;font-size:13.6px;color:#000;transform:scaleX(1.041);transform-origin:0 0;">Guiding</div>
<div class="a" style="left:351px;top:632px;width:582px;height:175px;background:#fff;border:1px solid #bcbcbc"></div>
<div class="a" style="left:426px;top:608px;width:106px;height:26px;background:#fff;border:1px solid #bcbcbc;border-bottom:none"></div>
<div class="t" style="left:446.5px;top:614.89px;font-size:13.6px;color:#000;transform:scaleX(1.044);transform-origin:0 0;">Histogram</div>
<div class="a" style="left:353px;top:635px;width:507px;height:168px;background:#000"></div>
<svg class="a" style="left:353px;top:635px" width="507" height="168" viewBox="353 635 507 168"><rect x="353" y="635" width="1.5" height="168" fill="#1a1aa0"/><rect x="353" y="801" width="507" height="2" fill="#1010c0"/><line x1="355" y1="636" x2="355" y2="801" stroke="#ffff00" stroke-width="2" stroke-dasharray="6 3"/><line x1="380" y1="636" x2="380" y2="801" stroke="#ffff00" stroke-width="2" stroke-dasharray="6 3"/><line x1="799" y1="636" x2="799" y2="801" stroke="#ffff00" stroke-width="2" stroke-dasharray="6 3"/><polyline points="355.00,799.00 355.00,798.99 355.00,798.97 355.01,798.93 355.02,798.88 355.03,798.80 355.04,798.70 355.06,798.58 355.08,798.44 355.11,798.27 355.13,798.08 355.16,797.87 355.20,797.63 355.24,797.37 355.28,797.08 355.32,796.77 355.37,796.44 355.43,796.08 355.48,795.69 355.55,795.28 355.61,794.85 355.68,794.39 355.75,793.91 355.83,793.40 355.91,792.87 356.00,792.32 356.09,791.74 356.18,791.15 356.28,790.52 356.38,789.88 356.49,789.21 356.60,788.53 356.72,787.82 356.84,787.09 356.96,786.34 357.09,785.57 357.23,784.78 357.37,783.98 357.51,783.15 357.66,782.31 357.81,781.45 357.96,780.58 358.13,779.69 358.29,778.78 358.46,777.86 358.64,776.93 358.82,775.98 359.00,775.02 359.19,774.05 359.39,773.07 359.59,772.07 359.79,771.07 360.00,770.05 360.21,769.03 360.43,768.00 360.66,766.96 360.89,765.91 361.12,764.86 361.36,763.80 361.60,762.74 361.85,761.67 362.10,760.59 362.36,759.51 362.63,758.43 362.90,757.35 363.17,756.26 363.45,755.17 363.73,754.09 364.02,753.00 364.32,751.90 364.62,750.81 364.92,749.72 365.23,748.63 365.55,747.55 365.87,746.46 366.19,745.38 366.52,744.30 366.86,743.22 367.20,742.14 367.55,741.07 367.90,740.00 368.26,738.94 368.62,737.88 368.99,736.82 369.36,735.77 369.74,734.73 370.13,733.69 370.52,732.66 370.91,731.63 371.31,730.61 371.72,729.59 372.13,728.58 372.55,727.58 372.97,726.58 373.40,725.60 373.83,724.61 374.27,723.64 374.71,722.67 375.16,721.71 375.62,720.76 376.08,719.82 376.54,718.88 377.02,717.95 377.49,717.03 377.98,716.12 378.47,715.21 378.96,714.32 379.46,713.43 379.97,712.55 380.48,711.68 381.00,710.81 381.52,709.96 382.05,709.11 382.58,708.27 383.12,707.44 383.67,706.62 384.22,705.80 384.77,705.00 385.34,704.20 385.91,703.41 386.48,702.63 387.06,701.86 387.65,701.09 388.24,700.33 388.83,699.59 389.44,698.84 390.05,698.11 390.66,697.39 391.28,696.67 391.91,695.96 392.54,695.26 393.18,694.57 393.82,693.88 394.47,693.20 395.13,692.53 395.79,691.87 396.46,691.22 397.13,690.57 397.81,689.93 398.50,689.30 399.19,688.67 399.89,688.05 400.59,687.44 401.30,686.84 402.01,686.24 402.74,685.65 403.46,685.07 404.20,684.49 404.93,683.92 405.68,683.36 406.43,682.80 407.19,682.25 407.95,681.71 408.72,681.17 409.50,680.64 410.28,680.11 411.07,679.60 411.86,679.08 412.66,678.58 413.47,678.08 414.28,677.58 415.10,677.09 415.92,676.61 416.75,676.13 417.59,675.66 418.43,675.20 419.28,674.74 420.13,674.28 420.99,673.83 421.86,673.39 422.74,672.95 423.62,672.52 424.50,672.09 425.39,671.66 426.29,671.25 427.20,670.83 428.11,670.42 429.02,670.02 429.95,669.62 430.88,669.23 431.81,668.84 432.75,668.45 433.70,668.07 434.66,667.70 435.62,667.32 436.58,666.96 437.56,666.59 438.54,666.24 439.52,665.88 440.52,665.53 441.51,665.18 442.52,664.84 443.53,664.50 444.55,664.17 445.57,663.84 446.60,663.51 447.64,663.19 448.68,662.87 449.73,662.55 450.79,662.24 451.85,661.93 452.92,661.63 453.99,661.33 455.07,661.03 456.16,660.73 457.26,660.44 458.36,660.16 459.46,659.87 460.58,659.59 461.70,659.31 462.82,659.04 463.96,658.76 465.09,658.50 466.24,658.23 467.39,657.97 468.55,657.71 469.72,657.45 470.89,657.20 472.07,656.94 473.25,656.70 474.44,656.45 475.64,656.21 476.84,655.97 478.05,655.73 479.27,655.49 480.50,655.26 481.73,655.03 482.96,654.80 484.21,654.58 485.46,654.36 486.71,654.14 487.98,653.92 489.25,653.70 490.52,653.49 491.81,653.28 493.09,653.07 494.39,652.86 495.69,652.66 497.00,652.46 498.32,652.26 499.64,652.06 500.97,651.86 502.31,651.67 503.65,651.48 505.00,651.29 506.35,651.10 507.72,650.92 509.09,650.73 510.46,650.55 511.84,650.37 513.23,650.19 514.63,650.02 516.03,649.84 517.44,649.67 518.86,649.50 520.28,649.33 521.71,649.16 523.14,649.00 524.59,648.84 526.04,648.67 527.49,648.51 528.96,648.35 530.42,648.20 531.90,648.04 533.38,647.89 534.87,647.73 536.37,647.58 537.87,647.43 539.38,647.29 540.90,647.14 542.43,646.99 543.96,646.85 545.49,646.71 547.04,646.57 548.59,646.43 550.15,646.29 551.71,646.15 553.28,646.02 554.86,645.88 556.45,645.75 558.04,645.62 559.64,645.49 561.24,645.36 562.85,645.23 564.47,645.11 566.10,644.98 567.73,644.86 569.37,644.73 571.02,644.61 572.67,644.49 574.33,644.37 576.00,644.26 577.67,644.14 579.36,644.02 581.04,643.91 582.74,643.79 584.44,643.68 586.15,643.57 587.86,643.46 589.59,643.35 591.32,643.24 593.05,643.13 594.80,643.02 596.55,642.92 598.30,642.81 600.07,642.71 601.84,642.61 603.62,642.51 605.40,642.41 607.20,642.30 608.99,642.21 610.80,642.11 612.61,642.01 614.43,641.91 616.26,641.82 618.09,641.72 619.94,641.63 621.78,641.54 623.64,641.44 625.50,641.35 627.37,641.26 629.25,641.17 631.13,641.08 633.02,640.99 634.92,640.91 636.82,640.82 638.73,640.73 640.65,640.65 642.57,640.56 644.51,640.48 646.45,640.40 648.39,640.32 650.35,640.23 652.31,640.15 654.27,640.07 656.25,639.99 658.23,639.91 660.22,639.84 662.22,639.76 664.22,639.68 666.23,639.61 668.25,639.53 670.27,639.46 672.30,639.38 674.34,639.31 676.39,639.23 678.44,639.16 680.50,639.09 682.57,639.02 684.64,638.95 686.72,638.88 688.81,638.81 690.91,638.74 693.01,638.67 695.12,638.60 697.24,638.54 699.36,638.47 701.50,638.40 703.63,638.34 705.78,638.27 707.93,638.21 710.09,638.14 712.26,638.08 714.44,638.02 716.62,637.95 718.81,637.89 721.00,637.83 723.21,637.77 725.42,637.71 727.64,637.65 729.86,637.59 732.09,637.53 734.33,637.47 736.58,637.41 738.84,637.36 741.10,637.30 743.37,637.24 745.64,637.19 747.93,637.13 750.22,637.07 752.51,637.02 754.82,636.96 757.13,636.91 759.45,636.86 761.78,636.80 764.11,636.75 766.45,636.70 768.80,636.64 771.16,636.59 773.52,636.54 775.89,636.49 778.27,636.44 780.65,636.39 783.05,636.34 785.45,636.29 787.85,636.24 790.27,636.19 792.69,636.14 795.12,636.10 797.56,636.05 800.00,636.00" fill="none" stroke="#ffff00" stroke-width="1.3"/><line x1="800" y1="636" x2="860" y2="636" stroke="#ffff00" stroke-width="1.3"/></svg>
<div class="t" style="left:368px;top:692.5px;font-size:13.6px;color:#fff;-webkit-text-stroke:0.35px #fff;transform-origin:0 0;transform:rotate(90deg) scaleX(0.971);">Black Level  .00%</div>
<div class="t" style="left:393px;top:668.5px;font-size:13.6px;color:#fff;-webkit-text-stroke:0.35px #fff;transform-origin:0 0;transform:rotate(90deg) scaleX(1.021);">Mid Level  05,049%</div>
<div class="t" style="left:792.5px;top:634.5px;font-size:13.6px;color:#fff;-webkit-text-stroke:0.35px #fff;transform-origin:0 0;transform:rotate(90deg) scaleX(0.983);">White Level  87,982%</div>
<div class="t" style="left:623.0px;top:643.89px;font-size:13.6px;color:#a0a0a0;transform:scaleX(0.985);transform-origin:0 0;">Horiz. Axis:</div>
<div class="a" style="left:697px;top:643px;width:13px;height:13px;background:#7d7d7d;border:1px solid #5a5a5a"></div>
<div class="t" style="left:714.4px;top:643.89px;font-size:13.6px;color:#a0a0a0;transform:scaleX(1.024);transform-origin:0 0;">Zoom</div>
<div class="a" style="left:761px;top:643px;width:13px;height:13px;background:#7d7d7d;border:1px solid #5a5a5a"></div>
<div class="t" style="left:778.0px;top:643.89px;font-size:13.6px;color:#a0a0a0;transform:scaleX(0.970);transform-origin:0 0;">Log</div>
<div class="a" style="left:807px;top:637px;width:25px;height:24px;background:#6e6e6e;border:1px solid #555"></div>
<svg class="a" style="left:810px;top:640px" width="19" height="18"><path d="M12 1L4 10H10L7 17L15 8H9Z" stroke="#000" stroke-width="1.6" fill="none" stroke-linejoin="round"/></svg>
<div class="a" style="left:834px;top:637px;width:25px;height:24px;background:#6e6e6e;border:1px solid #555"></div>
<svg class="a" style="left:836px;top:639px" width="21" height="20"><path d="M5 6A7.5 7.5 0 1 1 4 13" stroke="#000" stroke-width="2.2" fill="none"/><path d="M1 3L7 2L5 8Z" fill="#000"/></svg>
<div class="t" style="left:729.0px;top:785.39px;font-size:13.6px;color:#a0a0a0;transform:scaleX(1.026);transform-origin:0 0;">Stretch Mode</div>
<div class="a" style="left:817px;top:779px;width:41px;height:21px;background:#6e6e6e;border:1px solid #555"></div>
<div class="t" style="left:826.0px;top:784.39px;font-size:13.6px;color:#222;">2</div>
<div class="a" style="left:841px;top:780px;width:16px;height:10px;background:#7a7a7a;border:1px solid #555"></div>
<div class="a" style="left:841px;top:789px;width:16px;height:10px;background:#7a7a7a;border:1px solid #555"></div>
<svg class="a" style="left:844px;top:782px" width="10" height="15"><path d="M1 5L5 1L9 5M1 10L5 14L9 10" stroke="#222" stroke-width="1.3" fill="none"/></svg>
<div class="a" style="left:860px;top:635px;width:73px;height:172px;background:#f0f0f0"></div>
<div class="a" style="left:861px;top:636px;width:16px;height:11px;background:#e8e8e8;border:1px solid #c8c8c8"></div>
<svg class="a" style="left:865px;top:637px" width="9" height="9"><path d="M4.5 8.5V1M1 4.5L4.5 1L8 4.5" stroke="#000" stroke-width="1.6" fill="none"/></svg>
<div class="a" style="left:860px;top:647px;width:18px;height:122px;background:#ff0000"></div>
<div class="a" style="left:867px;top:652px;width:4px;height:112px;background:#e6e6e6"></div>
<div class="a" style="left:861px;top:770px;width:16px;height:10px;background:#e8e8e8;border:1px solid #c8c8c8"></div>
<svg class="a" style="left:865px;top:771px" width="9" height="9"><path d="M4.5 0V7.5M1 4L4.5 7.5L8 4" stroke="#000" stroke-width="1.6" fill="none"/></svg>
<div class="a" style="left:879px;top:636px;width:16px;height:11px;background:#e8e8e8;border:1px solid #c8c8c8"></div>
<svg class="a" style="left:883px;top:637px" width="9" height="9"><path d="M4.5 8.5V1M1 4.5L4.5 1L8 4.5" stroke="#000" stroke-width="1.6" fill="none"/></svg>
<div class="a" style="left:878px;top:647px;width:18px;height:122px;background:#008000"></div>
<div class="a" style="left:885px;top:652px;width:4px;height:112px;background:#e6e6e6"></div>
<div class="a" style="left:879px;top:770px;width:16px;height:10px;background:#e8e8e8;border:1px solid #c8c8c8"></div>
<svg class="a" style="left:883px;top:771px" width="9" height="9"><path d="M4.5 0V7.5M1 4L4.5 7.5L8 4" stroke="#000" stroke-width="1.6" fill="none"/></svg>
<div class="a" style="left:897px;top:636px;width:16px;height:11px;background:#e8e8e8;border:1px solid #c8c8c8"></div>
<svg class="a" style="left:901px;top:637px" width="9" height="9"><path d="M4.5 8.5V1M1 4.5L4.5 1L8 4.5" stroke="#000" stroke-width="1.6" fill="none"/></svg>
<div class="a" style="left:896px;top:647px;width:18px;height:122px;background:#0000ff"></div>
<div class="a" style="left:903px;top:652px;width:4px;height:112px;background:#e6e6e6"></div>
<div class="a" style="left:897px;top:770px;width:16px;height:10px;background:#e8e8e8;border:1px solid #c8c8c8"></div>
<svg class="a" style="left:901px;top:771px" width="9" height="9"><path d="M4.5 0V7.5M1 4L4.5 7.5L8 4" stroke="#000" stroke-width="1.6" fill="none"/></svg>
<div class="a" style="left:860px;top:703px;width:18px;height:11px;background:#eeeeee;border:1px solid #d8d8d8"></div>
<div class="a" style="left:878px;top:703px;width:18px;height:11px;background:#eeeeee;border:1px solid #d8d8d8"></div>
<div class="a" style="left:896px;top:703px;width:18px;height:11px;background:#eeeeee;border:1px solid #d8d8d8"></div>
<div class="a" style="left:914px;top:635px;width:5px;height:133px;background:linear-gradient(90deg,#ff0000,#cc6666)"></div>
<div class="a" style="left:919px;top:635px;width:8px;height:133px;background:#008000"></div>
<div class="a" style="left:927px;top:635px;width:5px;height:133px;background:#2020ff"></div>
<div class="a" style="left:921px;top:640px;width:4px;height:124px;background:#e0e0e0"></div>
<div class="a" style="left:914px;top:767px;width:18px;height:12px;background:#f4f4f4;border:1px solid #ccc"></div>
<div class="a" style="left:863px;top:782px;width:20px;height:20px;background:#f0f0f0;border:1px solid #aaa"></div>
<div class="a" style="left:885.5px;top:782px;width:20px;height:20px;background:#f0f0f0;border:1px solid #aaa"></div>
<div class="a" style="left:907px;top:782px;width:20px;height:20px;background:#f0f0f0;border:1px solid #aaa"></div>
<svg class="a" style="left:865px;top:784px" width="16" height="16"><path d="M10 1L3 9H8L6 15L13 7H8Z" stroke="#000" stroke-width="1.5" fill="none" stroke-linejoin="round"/></svg>
<svg class="a" style="left:887.5px;top:784px" width="16" height="16"><path d="M8 1L10 6L15 8L10 10L8 15L6 10L1 8L6 6Z" fill="#000"/></svg>
<svg class="a" style="left:909px;top:784px" width="17" height="17"><path d="M4 5A6 6 0 1 1 3.5 11" stroke="#000" stroke-width="1.8" fill="none"/><path d="M1 2.5L6 2L4.5 7Z" fill="#000"/></svg>
<div class="a" style="left:936px;top:77px;width:4px;height:730px;background:#c9c9c9"></div>
<div class="a" style="left:940px;top:77px;width:1px;height:730px;background:#e6e6e6"></div>
<div class="a" style="left:941px;top:77px;width:488px;height:1px;background:#8a8a8a"></div>
<div class="a" style="left:941px;top:78px;width:488px;height:22px;background:#99b4d1"></div>
<div class="a" style="left:941px;top:100px;width:488px;height:1px;background:#6e6e6e"></div>
<div class="t" style="left:943.3px;top:83.59px;font-size:13.6px;color:#000;transform:scaleX(0.989);transform-origin:0 0;">Camera Controls</div>
<svg class="a" style="left:1402px;top:87px" width="9" height="5"><path d="M0 0H9L4.5 5Z" fill="#444"/></svg>
<svg class="a" style="left:1416px;top:83px" width="10" height="13"><path d="M2.5 1.5H7.5M3 1.5V8M7 1.5V8M1 8H9M5 8V12.5" stroke="#444" stroke-width="1.3" fill="none"/></svg>
<div class="a" style="left:1412px;top:101px;width:17px;height:706px;background:#f0f0f0"></div>
<div class="a" style="left:1413px;top:294px;width:16px;height:393px;background:#cdcdcd"></div>
<svg class="a" style="left:1417px;top:107px" width="9" height="6"><path d="M1 5L4.5 1.5L8 5" stroke="#707070" stroke-width="1.3" fill="none"/></svg>
<svg class="a" style="left:1417px;top:795px" width="9" height="6"><path d="M1 1L4.5 4.5L8 1" stroke="#909090" stroke-width="1.3" fill="none"/></svg>
<div class="a" style="left:941px;top:96px;width:471px;height:9px;border:1px solid #b4b4b4;border-top:none;border-radius:0 0 4px 4px"></div>
<div class="a" style="left:941px;top:78px;width:471px;height:22px;background:#99b4d1"></div>
<div class="a" style="left:941px;top:100px;width:488px;height:1px;background:#6e6e6e"></div>
<div class="t" style="left:943.3px;top:83.59px;font-size:13.6px;color:#000;transform:scaleX(0.989);transform-origin:0 0;">Camera Controls</div>
<svg class="a" style="left:1402px;top:87px" width="9" height="5"><path d="M0 0H9L4.5 5Z" fill="#444"/></svg>
<svg class="a" style="left:1416px;top:83px" width="10" height="13"><path d="M2.5 1.5H7.5M3 1.5V8M7 1.5V8M1 8H9M5 8V12.5" stroke="#444" stroke-width="1.3" fill="none"/></svg>
<div class="a" style="left:941px;top:108px;width:471px;height:342px;border:1px solid #b4b4b4;border-radius:4px"></div>
<div class="a" style="left:943px;top:110px;width:466px;height:19px;background:#faebd7;border-radius:3px"></div>
<svg class="a" style="left:945px;top:111px" width="17" height="17"><circle cx="8.5" cy="8.5" r="7.8" fill="#fff" stroke="#333" stroke-width="1"/><path d="M5 10L8.5 6.5L12 10" stroke="#222" stroke-width="1.9" fill="none"/></svg>
<div class="t" style="left:967.5px;top:113.54px;font-size:14.6px;color:#000;font-weight:bold;transform:scaleX(0.927);transform-origin:0 0;">Camera Controls</div>
<svg class="a" style="left:1390px;top:114px" width="13" height="10"><path d="M0 1H13M0 5H13M0 9H13" stroke="#222" stroke-width="1.8"/></svg>
<div class="a" style="left:944px;top:132px;width:465px;height:97px;border:1px solid #d0d0d0;border-radius:4px"></div>
<div class="t" style="left:949.2px;top:144.69px;font-size:13.6px;color:#000;transform:scaleX(1.015);transform-origin:0 0;">Exposure</div>
<div class="a" style="left:1018px;top:138px;width:300px;height:25px;background:#fff;border:1px solid #b4b4b4"></div>
<div class="t" style="left:1022.0px;top:144.69px;font-size:13.6px;color:#000;transform:scaleX(0.985);transform-origin:0 0;">20,0 s</div>
<div class="a" style="left:1329px;top:143px;width:14px;height:14px;background:#fff;border:1px solid #333"></div>
<svg class="a" style="left:1329px;top:143px" width="14" height="14"><path d="M2.5 7L5.5 10L11 4" stroke="#000" stroke-width="1.5" fill="none"/></svg>
<div class="t" style="left:1348.3px;top:144.69px;font-size:13.6px;color:#000;">LX Mode</div>
<div class="a" style="left:949px;top:167px;width:1px;height:3px;background:#000"></div>
<div class="a" style="left:985px;top:167px;width:1px;height:3px;background:#000"></div>
<div class="a" style="left:1022px;top:167px;width:1px;height:3px;background:#000"></div>
<div class="a" style="left:1058px;top:167px;width:1px;height:3px;background:#000"></div>
<div class="a" style="left:1094px;top:167px;width:1px;height:3px;background:#000"></div>
<div class="a" style="left:1127px;top:167px;width:1px;height:3px;background:#000"></div>
<div class="a" style="left:1165px;top:167px;width:1px;height:3px;background:#000"></div>
<div class="a" style="left:1185px;top:167px;width:1px;height:3px;background:#000"></div>
<div class="a" style="left:1204px;top:167px;width:1px;height:3px;background:#000"></div>
<div class="a" style="left:1223px;top:167px;width:1px;height:3px;background:#000"></div>
<div class="a" style="left:1237px;top:167px;width:1px;height:3px;background:#000"></div>
<div class="a" style="left:1258px;top:167px;width:1px;height:3px;background:#000"></div>
<div class="a" style="left:1274px;top:167px;width:1px;height:3px;background:#000"></div>
<div class="a" style="left:1285px;top:167px;width:1px;height:3px;background:#000"></div>
<div class="a" style="left:1321px;top:167px;width:1px;height:3px;background:#000"></div>
<div class="a" style="left:1342px;top:167px;width:1px;height:3px;background:#000"></div>
<div class="a" style="left:1379px;top:167px;width:1px;height:3px;background:#000"></div>
<div class="a" style="left:1384px;top:167px;width:1px;height:3px;background:#000"></div>
<div class="a" style="left:949px;top:193px;width:1px;height:3px;background:#000"></div>
<div class="a" style="left:985px;top:193px;width:1px;height:3px;background:#000"></div>
<div class="a" style="left:1022px;top:193px;width:1px;height:3px;background:#000"></div>
<div class="a" style="left:1058px;top:193px;width:1px;height:3px;background:#000"></div>
<div class="a" style="left:1094px;top:193px;width:1px;height:3px;background:#000"></div>
<div class="a" style="left:1127px;top:193px;width:1px;height:3px;background:#000"></div>
<div class="a" style="left:1165px;top:193px;width:1px;height:3px;background:#000"></div>
<div class="a" style="left:1185px;top:193px;width:1px;height:3px;background:#000"></div>
<div class="a" style="left:1204px;top:193px;width:1px;height:3px;background:#000"></div>
<div class="a" style="left:1223px;top:193px;width:1px;height:3px;background:#000"></div>
<div class="a" style="left:1237px;top:193px;width:1px;height:3px;background:#000"></div>
<div class="a" style="left:1258px;top:193px;width:1px;height:3px;background:#000"></div>
<div class="a" style="left:1274px;top:193px;width:1px;height:3px;background:#000"></div>
<div class="a" style="left:1285px;top:193px;width:1px;height:3px;background:#000"></div>
<div class="a" style="left:1321px;top:193px;width:1px;height:3px;background:#000"></div>
<div class="a" style="left:1342px;top:193px;width:1px;height:3px;background:#000"></div>
<div class="a" style="left:1379px;top:193px;width:1px;height:3px;background:#000"></div>
<div class="a" style="left:1384px;top:193px;width:1px;height:3px;background:#000"></div>
<div class="a" style="left:949px;top:180px;width:435px;height:4px;background:#e7eaea;border:1px solid #d6d6d6"></div>
<div class="a" style="left:1138px;top:173px;width:11px;height:17px;background:#e5e5e5;border:1px solid #a9a9a9"></div>
<div class="a" style="left:1391px;top:168px;width:17px;height:14px;background:#e6e6e6;border:1px solid #adadad"></div>
<div class="a" style="left:1391px;top:182px;width:17px;height:14px;background:#e6e6e6;border:1px solid #adadad"></div>
<svg class="a" style="left:1395px;top:172px" width="9" height="6"><path d="M1 5L4.5 1.5L8 5" stroke="#222" stroke-width="1.6" fill="none"/></svg>
<svg class="a" style="left:1395px;top:186px" width="9" height="6"><path d="M1 1L4.5 4.5L8 1" stroke="#222" stroke-width="1.6" fill="none"/></svg>
<div class="t" style="left:949.2px;top:207.59px;font-size:13.6px;color:#000;transform:scaleX(0.983);transform-origin:0 0;">Quick Picks</div>
<div class="a" style="left:1032px;top:202px;width:323px;height:25px;background:linear-gradient(#f2f2f2,#e6e6e6);border:1px solid #acacac"></div>
<svg class="a" style="left:1341px;top:212px" width="8" height="5"><path d="M0.5 0.5L4 4L7.5 0.5" stroke="#555" stroke-width="1.1" fill="none"/></svg>
<div class="a" style="left:1361px;top:207px;width:14px;height:14px;background:#fff;border:1px solid #333"></div>
<div class="t" style="left:1380.4px;top:207.59px;font-size:13.6px;color:#000;transform:scaleX(1.058);transform-origin:0 0;">Auto</div>
<div class="a" style="left:1409px;top:200px;width:3px;height:30px;background:#f0f0f0"></div>
<div class="a" style="left:1411px;top:100px;width:1px;height:350px;background:#c6c6c6"></div>
<div class="t" style="left:944.0px;top:241.04px;font-size:12px;color:#000;transform:scaleX(0.909);transform-origin:0 0;">Analogue Gain</div>
<div class="a" style="left:1030px;top:243px;width:282px;height:4px;background:#e7eaea;border:1px solid #d6d6d6"></div>
<svg class="a" style="left:1094px;top:236px" width="12" height="19"><path d="M0.5 0.5H11.5V13L6 18.5L0.5 13Z" fill="#e5e5e5" stroke="#a9a9a9"/></svg>
<div class="a" style="left:1030px;top:257px;width:1px;height:3px;background:#000"></div>
<div class="a" style="left:1047px;top:257px;width:1px;height:3px;background:#000"></div>
<div class="a" style="left:1063px;top:257px;width:1px;height:3px;background:#000"></div>
<div class="a" style="left:1080px;top:257px;width:1px;height:3px;background:#000"></div>
<div class="a" style="left:1096px;top:257px;width:1px;height:3px;background:#000"></div>
<div class="a" style="left:1113px;top:257px;width:1px;height:3px;background:#000"></div>
<div class="a" style="left:1130px;top:257px;width:1px;height:3px;background:#000"></div>
<div class="a" style="left:1146px;top:257px;width:1px;height:3px;background:#000"></div>
<div class="a" style="left:1163px;top:257px;width:1px;height:3px;background:#000"></div>
<div class="a" style="left:1179px;top:257px;width:1px;height:3px;background:#000"></div>
<div class="a" style="left:1196px;top:257px;width:1px;height:3px;background:#000"></div>
<div class="a" style="left:1212px;top:257px;width:1px;height:3px;background:#000"></div>
<div class="a" style="left:1229px;top:257px;width:1px;height:3px;background:#000"></div>
<div class="a" style="left:1245px;top:257px;width:1px;height:3px;background:#000"></div>
<div class="a" style="left:1262px;top:257px;width:1px;height:3px;background:#000"></div>
<div class="a" style="left:1278px;top:257px;width:1px;height:3px;background:#000"></div>
<div class="a" style="left:1295px;top:257px;width:1px;height:3px;background:#000"></div>
<div class="a" style="left:1312px;top:257px;width:1px;height:3px;background:#000"></div>
<div class="a" style="left:1318px;top:232px;width:17px;height:15px;background:#e6e6e6;border:1px solid #adadad"></div>
<div class="a" style="left:1318px;top:247px;width:17px;height:15px;background:#e6e6e6;border:1px solid #adadad"></div>
<svg class="a" style="left:1322px;top:237px" width="9" height="6"><path d="M1 5L4.5 1.5L8 5" stroke="#222" stroke-width="1.6" fill="none"/></svg>
<svg class="a" style="left:1322px;top:252px" width="9" height="6"><path d="M1 1L4.5 4.5L8 1" stroke="#222" stroke-width="1.6" fill="none"/></svg>
<div class="a" style="left:1339px;top:237px;width:35px;height:20px;background:#e1e1e1;border:1px solid #7a7a7a"></div>
<div class="t" style="left:1342.0px;top:241.39px;font-size:13.6px;color:#000;transform:scaleX(1.022);transform-origin:0 0;">Auto</div>
<div class="a" style="left:1377px;top:237px;width:30px;height:20px;background:#fff;border:1px solid #b4b4b4"></div>
<div class="t" style="left:1381.0px;top:241.39px;font-size:13.6px;color:#000;transform:scaleX(0.970);transform-origin:0 0;">210</div>
<div class="t" style="left:944.0px;top:266.54px;font-size:12px;color:#000;transform:scaleX(0.909);transform-origin:0 0;">Frame Rate</div>
<div class="t" style="left:944.0px;top:278.04px;font-size:12px;color:#000;transform:scaleX(0.935);transform-origin:0 0;">Limit</div>
<div class="a" style="left:1027px;top:268px;width:382px;height:20px;background:linear-gradient(#f2f2f2,#e6e6e6);border:1px solid #acacac"></div>
<svg class="a" style="left:1394px;top:276px" width="8" height="5"><path d="M0.5 0.5L4 4L7.5 0.5" stroke="#555" stroke-width="1.1" fill="none"/></svg>
<div class="t" style="left:1033.3px;top:272.19px;font-size:13.6px;color:#000;transform:scaleX(1.013);transform-origin:0 0;">Maximum</div>
<div class="t" style="left:944.0px;top:303.44px;font-size:12px;color:#000;transform:scaleX(0.931);transform-origin:0 0;">Offset</div>
<div class="a" style="left:1030px;top:305px;width:338px;height:4px;background:#e7eaea;border:1px solid #d6d6d6"></div>
<svg class="a" style="left:1029px;top:299px" width="12" height="19"><path d="M0.5 0.5H11.5V13L6 18.5L0.5 13Z" fill="#e5e5e5" stroke="#a9a9a9"/></svg>
<div class="a" style="left:1030px;top:319px;width:1px;height:3px;background:#000"></div>
<div class="a" style="left:1064px;top:319px;width:1px;height:3px;background:#000"></div>
<div class="a" style="left:1098px;top:319px;width:1px;height:3px;background:#000"></div>
<div class="a" style="left:1132px;top:319px;width:1px;height:3px;background:#000"></div>
<div class="a" style="left:1165px;top:319px;width:1px;height:3px;background:#000"></div>
<div class="a" style="left:1199px;top:319px;width:1px;height:3px;background:#000"></div>
<div class="a" style="left:1233px;top:319px;width:1px;height:3px;background:#000"></div>
<div class="a" style="left:1267px;top:319px;width:1px;height:3px;background:#000"></div>
<div class="a" style="left:1301px;top:319px;width:1px;height:3px;background:#000"></div>
<div class="a" style="left:1334px;top:319px;width:1px;height:3px;background:#000"></div>
<div class="a" style="left:1368px;top:319px;width:1px;height:3px;background:#000"></div>
<div class="a" style="left:1377px;top:300px;width:30px;height:18px;background:#fff;border:1px solid #b4b4b4"></div>
<div class="t" style="left:1381.0px;top:302.39px;font-size:13.6px;color:#000;transform:scaleX(1.058);transform-origin:0 0;">6</div>
<div class="t" style="left:944.0px;top:335.94px;font-size:12px;color:#000;transform:scaleX(0.907);transform-origin:0 0;">USB Speed</div>
<div class="a" style="left:1030px;top:337px;width:338px;height:4px;background:#e7eaea;border:1px solid #d6d6d6"></div>
<svg class="a" style="left:1138px;top:331px" width="12" height="19"><path d="M0.5 0.5H11.5V13L6 18.5L0.5 13Z" fill="#e5e5e5" stroke="#a9a9a9"/></svg>
<div class="a" style="left:1030px;top:351px;width:1px;height:3px;background:#000"></div>
<div class="a" style="left:1056px;top:351px;width:1px;height:3px;background:#000"></div>
<div class="a" style="left:1082px;top:351px;width:1px;height:3px;background:#000"></div>
<div class="a" style="left:1108px;top:351px;width:1px;height:3px;background:#000"></div>
<div class="a" style="left:1134px;top:351px;width:1px;height:3px;background:#000"></div>
<div class="a" style="left:1160px;top:351px;width:1px;height:3px;background:#000"></div>
<div class="a" style="left:1186px;top:351px;width:1px;height:3px;background:#000"></div>
<div class="a" style="left:1212px;top:351px;width:1px;height:3px;background:#000"></div>
<div class="a" style="left:1238px;top:351px;width:1px;height:3px;background:#000"></div>
<div class="a" style="left:1264px;top:351px;width:1px;height:3px;background:#000"></div>
<div class="a" style="left:1290px;top:351px;width:1px;height:3px;background:#000"></div>
<div class="a" style="left:1316px;top:351px;width:1px;height:3px;background:#000"></div>
<div class="a" style="left:1342px;top:351px;width:1px;height:3px;background:#000"></div>
<div class="a" style="left:1368px;top:351px;width:1px;height:3px;background:#000"></div>
<div class="a" style="left:1377px;top:331px;width:30px;height:19px;background:#fff;border:1px solid #b4b4b4"></div>
<div class="t" style="left:1381.0px;top:334.39px;font-size:13.6px;color:#000;transform:scaleX(1.124);transform-origin:0 0;">57</div>
<div class="t" style="left:944.0px;top:366.24px;font-size:12px;color:#000;transform:scaleX(0.913);transform-origin:0 0;">Mono Binning</div>
<div class="a" style="left:1027px;top:363px;width:382px;height:19px;background:linear-gradient(#f2f2f2,#e6e6e6);border:1px solid #acacac"></div>
<svg class="a" style="left:1394px;top:370px" width="8" height="5"><path d="M0.5 0.5L4 4L7.5 0.5" stroke="#555" stroke-width="1.1" fill="none"/></svg>
<div class="t" style="left:1033.3px;top:366.69px;font-size:13.6px;color:#000;">Off</div>
<div class="t" style="left:944.0px;top:395.94px;font-size:12px;color:#000;transform:scaleX(0.900);transform-origin:0 0;">Flip</div>
<div class="a" style="left:1027px;top:392px;width:382px;height:20px;background:linear-gradient(#f2f2f2,#e6e6e6);border:1px solid #acacac"></div>
<svg class="a" style="left:1394px;top:400px" width="8" height="5"><path d="M0.5 0.5L4 4L7.5 0.5" stroke="#555" stroke-width="1.1" fill="none"/></svg>
<div class="t" style="left:1033.3px;top:396.39px;font-size:13.6px;color:#000;transform:scaleX(1.012);transform-origin:0 0;">None</div>
<div class="t" style="left:944.0px;top:421.14px;font-size:12px;color:#000;transform:scaleX(0.910);transform-origin:0 0;">Exposure/Gain</div>
<div class="t" style="left:944.0px;top:432.64px;font-size:12px;color:#000;transform:scaleX(0.916);transform-origin:0 0;">Shift</div>
<div class="a" style="left:1030px;top:428px;width:337px;height:4px;background:#e7eaea;border:1px solid #d6d6d6"></div>
<svg class="a" style="left:1192px;top:422px" width="12" height="19"><path d="M0.5 0.5H11.5V13L6 18.5L0.5 13Z" fill="#e5e5e5" stroke="#a9a9a9"/></svg>
<div class="a" style="left:1030px;top:442px;width:1px;height:3px;background:#000"></div>
<div class="a" style="left:1058px;top:442px;width:1px;height:3px;background:#000"></div>
<div class="a" style="left:1086px;top:442px;width:1px;height:3px;background:#000"></div>
<div class="a" style="left:1114px;top:442px;width:1px;height:3px;background:#000"></div>
<div class="a" style="left:1142px;top:442px;width:1px;height:3px;background:#000"></div>
<div class="a" style="left:1170px;top:442px;width:1px;height:3px;background:#000"></div>
<div class="a" style="left:1198px;top:442px;width:1px;height:3px;background:#000"></div>
<div class="a" style="left:1226px;top:442px;width:1px;height:3px;background:#000"></div>
<div class="a" style="left:1254px;top:442px;width:1px;height:3px;background:#000"></div>
<div class="a" style="left:1282px;top:442px;width:1px;height:3px;background:#000"></div>
<div class="a" style="left:1310px;top:442px;width:1px;height:3px;background:#000"></div>
<div class="a" style="left:1338px;top:442px;width:1px;height:3px;background:#000"></div>
<div class="a" style="left:1366px;top:442px;width:1px;height:3px;background:#000"></div>
<div class="a" style="left:1375px;top:423px;width:32px;height:20px;background:#fff;border:1px solid #b4b4b4"></div>
<div class="t" style="left:1379.0px;top:427.39px;font-size:13.6px;color:#000;transform:scaleX(0.982);transform-origin:0 0;">0,00</div>
<div class="a" style="left:941px;top:453px;width:471px;height:148px;border:1px solid #b4b4b4;border-radius:4px"></div>
<div class="a" style="left:943px;top:454px;width:466px;height:20px;background:#f0f8ff;border-radius:3px"></div>
<svg class="a" style="left:945px;top:456px" width="17" height="17"><circle cx="8.5" cy="8.5" r="7.8" fill="#fff" stroke="#333" stroke-width="1"/><path d="M5 10L8.5 6.5L12 10" stroke="#222" stroke-width="1.9" fill="none"/></svg>
<div class="t" style="left:967.5px;top:457.74px;font-size:14.6px;color:#000;font-weight:bold;transform:scaleX(0.922);transform-origin:0 0;">Image Controls</div>
<svg class="a" style="left:1390px;top:459px" width="13" height="10"><path d="M0 1H13M0 5H13M0 9H13" stroke="#222" stroke-width="1.8"/></svg>
<div class="t" style="left:944.0px;top:486.14px;font-size:12px;color:#000;transform:scaleX(0.915);transform-origin:0 0;">White Bal (R)</div>
<div class="a" style="left:1030px;top:488px;width:282px;height:4px;background:#e7eaea;border:1px solid #d6d6d6"></div>
<svg class="a" style="left:1173px;top:482px" width="12" height="19"><path d="M0.5 0.5H11.5V13L6 18.5L0.5 13Z" fill="#f3f3f3" stroke="#cfcfcf"/></svg>
<div class="a" style="left:1030px;top:501px;width:1px;height:3px;background:#000"></div>
<div class="a" style="left:1089px;top:501px;width:1px;height:3px;background:#000"></div>
<div class="a" style="left:1147px;top:501px;width:1px;height:3px;background:#000"></div>
<div class="a" style="left:1206px;top:501px;width:1px;height:3px;background:#000"></div>
<div class="a" style="left:1264px;top:501px;width:1px;height:3px;background:#000"></div>
<div class="a" style="left:1311px;top:501px;width:1px;height:3px;background:#000"></div>
<div class="a" style="left:1318px;top:478px;width:17px;height:14px;background:#e6e6e6;border:1px solid #adadad"></div>
<div class="a" style="left:1318px;top:492px;width:17px;height:14px;background:#e6e6e6;border:1px solid #adadad"></div>
<svg class="a" style="left:1322px;top:482px" width="9" height="6"><path d="M1 5L4.5 1.5L8 5" stroke="#222" stroke-width="1.6" fill="none"/></svg>
<svg class="a" style="left:1322px;top:496px" width="9" height="6"><path d="M1 1L4.5 4.5L8 1" stroke="#222" stroke-width="1.6" fill="none"/></svg>
<div class="a" style="left:1339px;top:482px;width:35px;height:20px;background:#cce4f7;border:1px solid #3a6ea5"></div>
<div class="t" style="left:1342.0px;top:486.39px;font-size:13.6px;color:#000;transform:scaleX(1.022);transform-origin:0 0;">Auto</div>
<div class="a" style="left:1377px;top:482px;width:30px;height:20px;background:#fbfbfb;border:1px solid #d3d3d3"></div>
<div class="t" style="left:1381.0px;top:486.39px;font-size:13.6px;color:#6d6d6d;transform:scaleX(1.124);transform-origin:0 0;">72</div>
<div class="t" style="left:944.0px;top:518.24px;font-size:12px;color:#000;transform:scaleX(0.911);transform-origin:0 0;">White Bal (G)</div>
<div class="a" style="left:1030px;top:520px;width:282px;height:4px;background:#e7eaea;border:1px solid #d6d6d6"></div>
<svg class="a" style="left:1166px;top:514px" width="12" height="19"><path d="M0.5 0.5H11.5V13L6 18.5L0.5 13Z" fill="#f3f3f3" stroke="#cfcfcf"/></svg>
<div class="a" style="left:1030px;top:533px;width:1px;height:3px;background:#000"></div>
<div class="a" style="left:1089px;top:533px;width:1px;height:3px;background:#000"></div>
<div class="a" style="left:1147px;top:533px;width:1px;height:3px;background:#000"></div>
<div class="a" style="left:1206px;top:533px;width:1px;height:3px;background:#000"></div>
<div class="a" style="left:1264px;top:533px;width:1px;height:3px;background:#000"></div>
<div class="a" style="left:1311px;top:533px;width:1px;height:3px;background:#000"></div>
<div class="a" style="left:1318px;top:509px;width:17px;height:14px;background:#e6e6e6;border:1px solid #adadad"></div>
<div class="a" style="left:1318px;top:523px;width:17px;height:14px;background:#e6e6e6;border:1px solid #adadad"></div>
<svg class="a" style="left:1322px;top:513px" width="9" height="6"><path d="M1 5L4.5 1.5L8 5" stroke="#222" stroke-width="1.6" fill="none"/></svg>
<svg class="a" style="left:1322px;top:527px" width="9" height="6"><path d="M1 1L4.5 4.5L8 1" stroke="#222" stroke-width="1.6" fill="none"/></svg>
<div class="a" style="left:1339px;top:514px;width:35px;height:20px;background:#cce4f7;border:1px solid #3a6ea5"></div>
<div class="t" style="left:1342.0px;top:518.39px;font-size:13.6px;color:#000;transform:scaleX(1.022);transform-origin:0 0;">Auto</div>
<div class="a" style="left:1377px;top:514px;width:30px;height:20px;background:#fbfbfb;border:1px solid #d3d3d3"></div>
<div class="t" style="left:1381.0px;top:518.39px;font-size:13.6px;color:#6d6d6d;transform:scaleX(1.058);transform-origin:0 0;">0</div>
<div class="t" style="left:944.0px;top:550.04px;font-size:12px;color:#000;transform:scaleX(0.914);transform-origin:0 0;">White Bal (B)</div>
<div class="a" style="left:1030px;top:552px;width:282px;height:4px;background:#e7eaea;border:1px solid #d6d6d6"></div>
<svg class="a" style="left:1253px;top:546px" width="12" height="19"><path d="M0.5 0.5H11.5V13L6 18.5L0.5 13Z" fill="#f3f3f3" stroke="#cfcfcf"/></svg>
<div class="a" style="left:1030px;top:565px;width:1px;height:3px;background:#000"></div>
<div class="a" style="left:1089px;top:565px;width:1px;height:3px;background:#000"></div>
<div class="a" style="left:1147px;top:565px;width:1px;height:3px;background:#000"></div>
<div class="a" style="left:1206px;top:565px;width:1px;height:3px;background:#000"></div>
<div class="a" style="left:1264px;top:565px;width:1px;height:3px;background:#000"></div>
<div class="a" style="left:1311px;top:565px;width:1px;height:3px;background:#000"></div>
<div class="a" style="left:1318px;top:541px;width:17px;height:15px;background:#e6e6e6;border:1px solid #adadad"></div>
<div class="a" style="left:1318px;top:556px;width:17px;height:15px;background:#e6e6e6;border:1px solid #adadad"></div>
<svg class="a" style="left:1322px;top:546px" width="9" height="6"><path d="M1 5L4.5 1.5L8 5" stroke="#222" stroke-width="1.6" fill="none"/></svg>
<svg class="a" style="left:1322px;top:561px" width="9" height="6"><path d="M1 1L4.5 4.5L8 1" stroke="#222" stroke-width="1.6" fill="none"/></svg>
<div class="a" style="left:1339px;top:546px;width:35px;height:20px;background:#cce4f7;border:1px solid #3a6ea5"></div>
<div class="t" style="left:1342.0px;top:550.39px;font-size:13.6px;color:#000;transform:scaleX(1.022);transform-origin:0 0;">Auto</div>
<div class="a" style="left:1377px;top:546px;width:30px;height:20px;background:#fbfbfb;border:1px solid #d3d3d3"></div>
<div class="t" style="left:1381.0px;top:550.39px;font-size:13.6px;color:#6d6d6d;transform:scaleX(0.970);transform-origin:0 0;">742</div>
<div class="t" style="left:944.0px;top:575.14px;font-size:12px;color:#000;transform:scaleX(0.917);transform-origin:0 0;">Timestamp</div>
<div class="t" style="left:944.0px;top:586.74px;font-size:12px;color:#000;transform:scaleX(0.917);transform-origin:0 0;">Frames</div>
<div class="a" style="left:1027px;top:577px;width:382px;height:20px;background:linear-gradient(#f2f2f2,#e6e6e6);border:1px solid #acacac"></div>
<svg class="a" style="left:1394px;top:585px" width="8" height="5"><path d="M0.5 0.5L4 4L7.5 0.5" stroke="#555" stroke-width="1.1" fill="none"/></svg>
<div class="t" style="left:1033.3px;top:580.79px;font-size:13.6px;color:#000;">Off</div>
<div class="a" style="left:941px;top:604px;width:471px;height:26px;border:1px solid #b4b4b4;border-radius:4px"></div>
<div class="a" style="left:943px;top:608px;width:466px;height:20px;background:#87cefa;border-radius:3px"></div>
<svg class="a" style="left:945px;top:610px" width="17" height="17"><circle cx="8.5" cy="8.5" r="7.8" fill="#fff" stroke="#333" stroke-width="1"/><path d="M5 7L8.5 10.5L12 7" stroke="#222" stroke-width="1.9" fill="none"/></svg>
<div class="t" style="left:967.5px;top:611.24px;font-size:14.6px;color:#000;font-weight:bold;transform:scaleX(0.917);transform-origin:0 0;">Thermal Controls</div>
<svg class="a" style="left:1390px;top:613px" width="13" height="10"><path d="M0 1H13M0 5H13M0 9H13" stroke="#222" stroke-width="1.8"/></svg>
<div class="a" style="left:941px;top:632px;width:471px;height:25px;border:1px solid #b4b4b4;border-radius:4px"></div>
<div class="a" style="left:943px;top:635px;width:466px;height:20px;background:#e6e6fa;border-radius:3px"></div>
<svg class="a" style="left:945px;top:636px" width="17" height="17"><circle cx="8.5" cy="8.5" r="7.8" fill="#fff" stroke="#333" stroke-width="1"/><path d="M5 7L8.5 10.5L12 7" stroke="#222" stroke-width="1.9" fill="none"/></svg>
<div class="t" style="left:967.5px;top:638.14px;font-size:14.6px;color:#000;font-weight:bold;transform:scaleX(0.911);transform-origin:0 0;">Preprocessing</div>
<svg class="a" style="left:1390px;top:640px" width="13" height="10"><path d="M0 1H13M0 5H13M0 9H13" stroke="#222" stroke-width="1.8"/></svg>
<div class="a" style="left:941px;top:660px;width:471px;height:115px;border:1px solid #b4b4b4;border-radius:4px"></div>
<div class="a" style="left:943px;top:663px;width:466px;height:19px;background:#ffb6c1;border-radius:3px"></div>
<svg class="a" style="left:945px;top:664px" width="17" height="17"><circle cx="8.5" cy="8.5" r="7.8" fill="#fff" stroke="#333" stroke-width="1"/><path d="M5 10L8.5 6.5L12 10" stroke="#222" stroke-width="1.9" fill="none"/></svg>
<div class="t" style="left:967.5px;top:665.34px;font-size:14.6px;color:#000;font-weight:bold;transform:scaleX(0.919);transform-origin:0 0;">Display Histogram Stretch</div>
<svg class="a" style="left:1390px;top:668px" width="13" height="10"><path d="M0 1H13M0 5H13M0 9H13" stroke="#222" stroke-width="1.8"/></svg>
<div class="a" style="left:941px;top:776px;width:471px;height:39px;border:1px solid #b4b4b4;border-radius:4px"></div>
<div class="a" style="left:943px;top:779px;width:466px;height:20px;background:#fafad2;border-radius:3px"></div>
<svg class="a" style="left:945px;top:780px" width="17" height="17"><circle cx="8.5" cy="8.5" r="7.8" fill="#fff" stroke="#333" stroke-width="1"/><path d="M5 10L8.5 6.5L12 10" stroke="#222" stroke-width="1.9" fill="none"/></svg>
<div class="t" style="left:967.5px;top:782.34px;font-size:14.6px;color:#000;font-weight:bold;transform:scaleX(0.915);transform-origin:0 0;">Scope Controls</div>
<svg class="a" style="left:1390px;top:784px" width="13" height="10"><path d="M0 1H13M0 5H13M0 9H13" stroke="#222" stroke-width="1.8"/></svg>
<div class="a" style="left:944px;top:802px;width:465px;height:10px;border:1px solid #c6c6c6;border-radius:4px"></div>
<div class="a" style="left:948px;top:805px;width:60px;height:1px;background:#b5b5b5"></div>
<div class="a" style="left:1012px;top:805px;width:32px;height:1px;background:#b5b5b5"></div>
<div class="a" style="left:1048px;top:805px;width:36px;height:1px;background:#b5b5b5"></div>
<div class="a" style="left:1090px;top:805px;width:40px;height:1px;background:#b5b5b5"></div>
<div class="a" style="left:1318px;top:804px;width:13px;height:3px;border:1px solid #555;border-bottom:none"></div>
<div class="a" style="left:941px;top:807px;width:488px;height:3px;background:#6b6b6b"></div>
<div class="a" style="left:942px;top:683px;width:469px;height:90px;background:#000"></div>
<svg class="a" style="left:942px;top:683px" width="469" height="90" viewBox="942 683 469 90"><line x1="944" y1="684" x2="944" y2="772" stroke="#8a7a10" stroke-width="1.5" stroke-dasharray="5 3"/><line x1="957" y1="684" x2="957" y2="772" stroke="#8a7a10" stroke-width="1.5" stroke-dasharray="5 3"/><line x1="1261" y1="684" x2="1261" y2="772" stroke="#8a7a10" stroke-width="1.5" stroke-dasharray="5 3"/><polyline points="943.00,772.00 943.00,771.99 943.01,771.97 943.01,771.93 943.02,771.86 943.04,771.77 943.06,771.66 943.08,771.52 943.11,771.36 943.14,771.17 943.18,770.96 943.22,770.72 943.27,770.46 943.32,770.17 943.38,769.85 943.44,769.50 943.50,769.14 943.58,768.74 943.65,768.32 943.73,767.88 943.82,767.41 943.92,766.92 944.01,766.41 944.12,765.87 944.23,765.31 944.34,764.73 944.46,764.13 944.59,763.51 944.72,762.88 944.86,762.22 945.01,761.55 945.16,760.86 945.31,760.16 945.47,759.44 945.64,758.71 945.82,757.97 946.00,757.22 946.18,756.45 946.38,755.68 946.57,754.90 946.78,754.11 946.99,753.31 947.21,752.51 947.43,751.70 947.66,750.89 947.90,750.07 948.14,749.26 948.39,748.43 948.64,747.61 948.90,746.79 949.17,745.97 949.45,745.14 949.73,744.32 950.02,743.50 950.31,742.69 950.61,741.87 950.92,741.06 951.24,740.26 951.56,739.46 951.88,738.66 952.22,737.87 952.56,737.08 952.91,736.30 953.26,735.53 953.63,734.76 953.99,734.00 954.37,733.25 954.75,732.50 955.14,731.76 955.54,731.03 955.94,730.31 956.35,729.59 956.77,728.89 957.19,728.19 957.62,727.50 958.06,726.82 958.51,726.15 958.96,725.48 959.42,724.83 959.89,724.18 960.36,723.54 960.84,722.91 961.33,722.29 961.82,721.68 962.33,721.08 962.84,720.48 963.35,719.90 963.88,719.32 964.41,718.76 964.95,718.20 965.50,717.64 966.05,717.10 966.61,716.57 967.18,716.04 967.75,715.53 968.34,715.02 968.93,714.51 969.53,714.02 970.13,713.54 970.74,713.06 971.36,712.59 971.99,712.13 972.63,711.67 973.27,711.22 973.92,710.78 974.58,710.35 975.24,709.92 975.92,709.50 976.60,709.09 977.28,708.69 977.98,708.29 978.68,707.90 979.39,707.51 980.11,707.13 980.84,706.76 981.57,706.39 982.32,706.03 983.07,705.68 983.82,705.33 984.59,704.99 985.36,704.65 986.14,704.32 986.93,703.99 987.73,703.67 988.53,703.36 989.34,703.05 990.16,702.74 990.99,702.44 991.82,702.15 992.67,701.86 993.52,701.57 994.38,701.29 995.24,701.02 996.12,700.74 997.00,700.48 997.89,700.21 998.79,699.96 999.70,699.70 1000.61,699.45 1001.53,699.21 1002.46,698.96 1003.40,698.73 1004.35,698.49 1005.30,698.26 1006.26,698.03 1007.23,697.81 1008.21,697.59 1009.20,697.37 1010.19,697.16 1011.20,696.95 1012.21,696.75 1013.23,696.54 1014.26,696.34 1015.29,696.15 1016.33,695.95 1017.39,695.76 1018.45,695.58 1019.51,695.39 1020.59,695.21 1021.67,695.03 1022.77,694.86 1023.87,694.68 1024.98,694.51 1026.09,694.34 1027.22,694.18 1028.35,694.02 1029.50,693.86 1030.65,693.70 1031.81,693.54 1032.97,693.39 1034.15,693.24 1035.33,693.09 1036.52,692.94 1037.72,692.80 1038.93,692.65 1040.15,692.51 1041.38,692.38 1042.61,692.24 1043.85,692.11 1045.10,691.97 1046.36,691.84 1047.63,691.71 1048.91,691.59 1050.19,691.46 1051.48,691.34 1052.78,691.22 1054.09,691.10 1055.41,690.98 1056.74,690.87 1058.07,690.75 1059.42,690.64 1060.77,690.53 1062.13,690.42 1063.50,690.31 1064.88,690.20 1066.26,690.10 1067.66,689.99 1069.06,689.89 1070.47,689.79 1071.90,689.69 1073.32,689.59 1074.76,689.49 1076.21,689.40 1077.66,689.30 1079.13,689.21 1080.60,689.12 1082.08,689.03 1083.57,688.94 1085.07,688.85 1086.58,688.76 1088.09,688.68 1089.62,688.59 1091.15,688.51 1092.69,688.43 1094.24,688.35 1095.80,688.27 1097.37,688.19 1098.95,688.11 1100.53,688.03 1102.12,687.95 1103.73,687.88 1105.34,687.80 1106.96,687.73 1108.59,687.66 1110.23,687.59 1111.87,687.52 1113.53,687.45 1115.19,687.38 1116.87,687.31 1118.55,687.24 1120.24,687.17 1121.94,687.11 1123.65,687.04 1125.37,686.98 1127.09,686.92 1128.83,686.85 1130.57,686.79 1132.32,686.73 1134.09,686.67 1135.86,686.61 1137.64,686.55 1139.43,686.49 1141.22,686.44 1143.03,686.38 1144.84,686.32 1146.67,686.27 1148.50,686.21 1150.35,686.16 1152.20,686.11 1154.06,686.05 1155.93,686.00 1157.80,685.95 1159.69,685.90 1161.59,685.85 1163.49,685.80 1165.41,685.75 1167.33,685.70 1169.26,685.65 1171.20,685.60 1173.15,685.55 1175.11,685.51 1177.08,685.46 1179.06,685.42 1181.05,685.37 1183.04,685.33 1185.05,685.28 1187.06,685.24 1189.08,685.20 1191.12,685.15 1193.16,685.11 1195.21,685.07 1197.27,685.03 1199.34,684.99 1201.42,684.95 1203.50,684.91 1205.60,684.87 1207.70,684.83 1209.82,684.79 1211.94,684.75 1214.08,684.71 1216.22,684.67 1218.37,684.64 1220.53,684.60 1222.70,684.56 1224.88,684.53 1227.07,684.49 1229.26,684.46 1231.47,684.42 1233.69,684.39 1235.91,684.35 1238.15,684.32 1240.39,684.29 1242.64,684.25 1244.90,684.22 1247.18,684.19 1249.46,684.16 1251.75,684.12 1254.05,684.09 1256.35,684.06 1258.67,684.03 1261.00,684.00" fill="none" stroke="#e0d000" stroke-width="1.2"/><line x1="1261" y1="684" x2="1366" y2="684" stroke="#e0d000" stroke-width="1.2"/><polyline points="943,720.0 944,723.4 945,726.4 946,729.2 947,731.7 948,734.0 949,736.0 950,737.9 951,739.6 952,741.2 953,742.6 954,743.9 955,745.0 956,746.1 957,747.1 958,748.0 959,748.9 960,749.7 961,750.1 962,751.1 963,751.5 964,752.4 965,752.9 966,752.8 967,753.2 968,754.7 969,754.3 970,754.7 971,756.1 972,755.8 973,756.6 974,756.4 975,757.0 976,756.5 977,757.6 978,758.3 979,758.0 980,758.6 981,758.7 982,757.8 983,759.4 984,759.3 985,758.9 986,758.5 987,760.6 988,759.9 989,760.7 990,761.2 991,761.1 992,761.8 993,760.6 994,761.8 995,761.1 996,762.6 997,762.6 998,760.6 999,760.9 1000,761.3 1001,763.6 1002,762.2 1003,762.9 1004,762.1 1005,762.8 1006,762.6 1007,762.7 1008,763.5 1009,763.6 1010,764.7 1011,764.2 1012,765.1 1013,765.0 1014,765.5 1015,764.7 1016,763.3 1017,765.5 1018,765.9 1019,765.9 1020,765.0 1021,765.5 1022,764.1 1023,766.1 1024,765.4 1025,764.7 1026,764.1 1027,766.6 1028,767.1 1029,764.5 1030,766.7 1031,765.7 1032,765.0 1033,765.5 1034,767.0 1035,767.4 1036,765.0 1037,766.8 1038,765.2 1039,767.3 1040,766.3 1041,768.0 1042,768.4 1043,767.0 1044,768.6 1045,766.6 1046,766.0 1047,767.6 1048,766.0 1049,766.6 1050,767.3 1051,768.0 1052,766.7 1053,766.4 1054,769.0 1055,767.4 1056,769.4 1057,769.3 1058,767.8 1059,768.1 1060,768.3 1061,768.8 1062,768.7 1063,768.6 1064,768.9 1065,769.9 1066,768.7 1067,768.5 1068,769.4 1069,768.0 1070,768.3 1071,770.4 1072,769.1 1073,769.2 1074,767.6 1075,768.9 1076,769.5 1077,767.8 1078,769.7 1079,769.8 1080,768.1 1081,769.9 1082,769.4 1083,770.1 1084,769.2 1085,770.3 1086,770.4 1087,768.3 1088,768.5 1089,770.4 1090,771.3 1091,769.2 1092,769.8 1093,770.3 1094,769.5 1095,769.7 1096,769.6 1097,769.8 1098,770.5 1099,769.7 1100,769.9 1101,771.1 1102,768.9 1103,770.6 1104,771.1 1105,769.9 1106,769.7 1107,771.5 1108,769.8 1109,769.7 1110,770.4 1111,771.3 1112,769.5 1113,770.2 1114,770.3 1115,771.8 1116,770.6 1117,771.9 1118,769.9 1119,770.4 1120,771.4 1121,772.0 1122,770.9 1123,770.2 1124,769.9 1125,771.2 1126,770.2 1127,772.0 1128,772.0 1129,770.2 1130,770.5 1131,772.0 1132,771.7 1133,772.0 1134,770.8 1135,770.2 1136,770.7 1137,772.0 1138,770.7 1139,771.0 1140,771.2 1141,771.2 1142,771.2 1143,772.0 1144,770.5 1145,770.1 1146,772.0 1147,772.0 1148,772.0 1149,771.4 1150,772.0 1151,772.0 1152,770.8 1153,772.0 1154,772.0 1155,772.0 1156,771.8 1157,771.1 1158,771.3 1159,771.0 1160,770.5 1161,772.0 1162,771.2 1163,772.0 1164,770.5 1165,772.0 1166,772.0 1167,772.0 1168,772.0 1169,772.0 1170,772.0 1171,770.5 1172,772.0 1173,771.0 1174,771.4 1175,772.0 1176,772.0 1177,771.8 1178,772.0 1179,772.0 1180,771.6 1181,771.4 1182,772.0 1183,772.0 1184,772.0 1185,771.7 1186,771.3 1187,772.0 1188,772.0 1189,771.2 1190,772.0 1191,772.0 1192,772.0 1193,772.0 1194,770.8 1195,772.0 1196,772.0 1197,770.9 1198,771.6 1199,771.6 1200,772.0 1201,772.0 1202,772.0 1203,772.0 1204,770.9 1205,771.0 1206,771.3 1207,771.3 1208,771.1 1209,772.0 1210,772.0 1211,771.2 1212,772.0 1213,771.9 1214,771.9 1215,772.0 1216,772.0 1217,772.0 1218,772.0 1219,771.6 1220,772.0 1221,771.4 1222,772.0 1223,772.0 1224,772.0 1225,771.3 1226,771.6 1227,772.0 1228,772.0 1229,772.0 1230,772.0 1231,772.0 1232,772.0 1233,772.0 1234,772.0 1235,772.0 1236,772.0 1237,772.0 1238,772.0 1239,772.0 1240,771.8 1241,772.0 1242,772.0 1243,771.3 1244,772.0 1245,772.0 1246,772.0 1247,772.0 1248,772.0 1249,772.0 1250,772.0 1251,772.0 1252,772.0 1253,771.5 1254,772.0 1255,772.0 1256,772.0 1257,772.0 1258,772.0 1259,772.0 1260,772.0 1261,771.5 1262,772.0 1263,771.2 1264,771.7 1265,772.0 1266,771.4 1267,771.5 1268,771.5 1269,772.0 1270,771.8 1271,771.3 1272,772.0 1273,771.6 1274,772.0 1275,772.0 1276,772.0 1277,772.0 1278,772.0 1279,772.0 1280,771.4 1281,772.0 1282,772.0 1283,772.0 1284,771.6 1285,772.0 1286,772.0 1287,771.5 1288,772.0 1289,772.0 1290,772.0 1291,772.0 1292,771.9 1293,772.0 1294,772.0 1295,772.0 1296,772.0 1297,772.0 1298,772.0 1299,772.0 1300,772.0 1301,771.6 1302,772.0 1303,772.0 1304,772.0 1305,772.0 1306,771.8 1307,772.0 1308,772.0 1309,772.0 1310,772.0 1311,772.0 1312,772.0 1313,772.0 1314,771.8 1315,771.7 1316,772.0 1317,772.0 1318,772.0 1319,772.0 1320,772.0 1321,771.9 1322,772.0 1323,772.0 1324,772.0 1325,772.0 1326,772.0 1327,772.0 1328,772.0 1329,772.0 1330,772.0 1331,772.0 1332,772.0 1333,772.0 1334,772.0 1335,772.0 1336,771.5 1337,772.0 1338,772.0 1339,771.9 1340,772.0 1341,772.0 1342,772.0 1343,771.8 1344,772.0 1345,772.0 1346,772.0 1347,772.0 1348,772.0 1349,772.0 1350,772.0 1351,772.0 1352,772.0 1353,772.0 1354,772.0 1355,772.0 1356,772.0 1357,772.0 1358,772.0 1359,772.0 1360,772.0 1361,772.0 1362,772.0 1363,772.0 1364,772.0 1365,772.0" fill="none" stroke="#ff2020" stroke-width="1.6"/><polyline points="943,718.5 944,721.9 945,724.9 946,727.7 947,730.2 948,732.5 949,734.5 950,736.4 951,738.1 952,739.7 953,741.1 954,742.4 955,743.5 956,744.6 957,745.6 958,746.5 959,747.4 960,748.2 961,748.7 962,749.3 963,750.4 964,751.1 965,751.7 966,751.5 967,752.7 968,752.5 969,753.1 970,753.9 971,753.4 972,753.7 973,755.1 974,754.6 975,755.1 976,755.7 977,756.2 978,755.3 979,756.1 980,756.6 981,756.9 982,756.6 983,757.6 984,758.5 985,757.6 986,758.1 987,757.4 988,758.0 989,759.0 990,757.9 991,760.0 992,760.2 993,758.4 994,760.7 995,759.4 996,760.6 997,760.8 998,759.7 999,760.9 1000,761.0 1001,761.6 1002,760.2 1003,761.8 1004,762.6 1005,761.8 1006,761.6 1007,760.4 1008,761.7 1009,761.4 1010,762.7 1011,762.7 1012,762.5 1013,761.5 1014,763.0 1015,763.1 1016,761.8 1017,764.1 1018,763.5 1019,762.0 1020,764.6 1021,762.3 1022,763.0 1023,764.3 1024,764.0 1025,764.0 1026,764.4 1027,763.9 1028,763.6 1029,763.3 1030,763.0 1031,765.1 1032,765.3 1033,764.8 1034,765.4 1035,764.4 1036,764.2 1037,764.6 1038,766.2 1039,763.8 1040,765.3 1041,764.6 1042,766.2 1043,765.1 1044,765.1 1045,765.4 1046,765.9 1047,766.7 1048,765.5 1049,767.0 1050,764.9 1051,765.5 1052,765.0 1053,765.1 1054,767.2 1055,767.1 1056,765.6 1057,765.6 1058,766.4 1059,767.4 1060,767.7 1061,767.6 1062,767.2 1063,765.9 1064,766.7 1065,766.2 1066,767.2 1067,767.4 1068,766.4 1069,766.6 1070,768.2 1071,766.0 1072,768.4 1073,768.7 1074,769.0 1075,767.3 1076,767.9 1077,768.0 1078,768.2 1079,769.3 1080,768.5 1081,767.4 1082,769.1 1083,768.0 1084,768.4 1085,768.8 1086,766.7 1087,769.1 1088,768.8 1089,768.3 1090,768.5 1091,768.3 1092,767.6 1093,768.6 1094,767.2 1095,768.6 1096,769.1 1097,768.5 1098,768.9 1099,770.1 1100,770.0 1101,767.7 1102,769.7 1103,769.3 1104,767.6 1105,768.6 1106,768.2 1107,767.8 1108,769.2 1109,770.4 1110,768.6 1111,770.3 1112,769.8 1113,768.1 1114,770.3 1115,769.6 1116,770.6 1117,770.0 1118,770.1 1119,768.9 1120,770.4 1121,770.8 1122,770.6 1123,769.3 1124,770.3 1125,769.5 1126,768.4 1127,768.3 1128,768.4 1129,768.8 1130,768.7 1131,769.7 1132,770.4 1133,769.9 1134,769.6 1135,770.3 1136,769.3 1137,769.8 1138,770.7 1139,769.6 1140,769.0 1141,771.2 1142,770.6 1143,769.6 1144,769.6 1145,770.1 1146,770.4 1147,769.3 1148,768.6 1149,769.3 1150,771.0 1151,769.1 1152,770.1 1153,769.3 1154,769.3 1155,769.2 1156,770.0 1157,769.3 1158,768.9 1159,769.1 1160,769.3 1161,770.3 1162,769.0 1163,768.9 1164,770.2 1165,770.1 1166,771.0 1167,769.1 1168,770.2 1169,770.1 1170,769.1 1171,771.9 1172,769.7 1173,769.3 1174,770.5 1175,769.5 1176,770.9 1177,770.1 1178,769.5 1179,769.3 1180,771.3 1181,769.9 1182,771.5 1183,770.5 1184,772.0 1185,770.1 1186,769.9 1187,770.0 1188,771.6 1189,771.1 1190,770.3 1191,769.5 1192,771.3 1193,772.0 1194,771.0 1195,769.3 1196,769.4 1197,769.6 1198,769.8 1199,769.4 1200,769.5 1201,771.3 1202,772.0 1203,770.0 1204,772.0 1205,770.8 1206,771.8 1207,772.0 1208,772.0 1209,769.5 1210,770.3 1211,771.2 1212,772.0 1213,769.7 1214,770.3 1215,772.0 1216,769.8 1217,770.6 1218,770.5 1219,771.5 1220,772.0 1221,770.0 1222,771.7 1223,771.7 1224,772.0 1225,771.2 1226,772.0 1227,770.6 1228,770.8 1229,770.2 1230,771.9 1231,771.0 1232,770.4 1233,770.1 1234,771.7 1235,771.4 1236,771.7 1237,770.8 1238,771.1 1239,770.1 1240,771.7 1241,769.7 1242,771.0 1243,771.9 1244,771.7 1245,769.9 1246,770.4 1247,772.0 1248,771.6 1249,772.0 1250,772.0 1251,771.0 1252,772.0 1253,771.9 1254,770.7 1255,770.8 1256,769.9 1257,770.9 1258,772.0 1259,770.0 1260,771.4 1261,770.0 1262,770.0 1263,771.7 1264,770.4 1265,769.9 1266,770.2 1267,771.7 1268,771.5 1269,769.8 1270,770.4 1271,772.0 1272,770.4 1273,771.4 1274,771.0 1275,772.0 1276,771.6 1277,772.0 1278,771.4 1279,770.3 1280,770.3 1281,770.0 1282,772.0 1283,770.1 1284,769.9 1285,772.0 1286,770.4 1287,772.0 1288,770.1 1289,771.2 1290,770.5 1291,772.0 1292,771.7 1293,771.7 1294,772.0 1295,772.0 1296,770.9 1297,771.6 1298,771.2 1299,770.2 1300,772.0 1301,771.6 1302,772.0 1303,770.5 1304,771.5 1305,771.2 1306,772.0 1307,770.1 1308,770.9 1309,771.3 1310,770.1 1311,771.5 1312,772.0 1313,771.1 1314,771.8 1315,771.7 1316,770.5 1317,770.9 1318,772.0 1319,770.9 1320,771.2 1321,770.1 1322,770.5 1323,770.4 1324,772.0 1325,772.0 1326,772.0 1327,772.0 1328,771.7 1329,772.0 1330,771.5 1331,771.1 1332,772.0 1333,772.0 1334,772.0 1335,771.3 1336,772.0 1337,771.1 1338,772.0 1339,772.0 1340,770.8 1341,772.0 1342,770.5 1343,770.2 1344,772.0 1345,770.8 1346,771.5 1347,771.8 1348,770.0 1349,772.0 1350,770.7 1351,771.2 1352,771.0 1353,772.0 1354,772.0 1355,770.8 1356,770.2 1357,770.8 1358,771.2 1359,770.2 1360,770.4 1361,772.0 1362,772.0 1363,772.0 1364,772.0 1365,772.0" fill="none" stroke="#2020ff" stroke-width="1.6"/><polyline points="943,719.5 944,722.9 945,725.9 946,728.7 947,731.2 948,733.5 949,735.5 950,737.4 951,739.1 952,740.7 953,742.1 954,743.4 955,744.5 956,745.6 957,746.6 958,747.5 959,748.4 960,749.2 961,749.8 962,750.2 963,751.0 964,751.7 965,752.3 966,752.9 967,753.1 968,754.2 969,753.9 970,754.5 971,755.5 972,755.7 973,755.3 974,755.6 975,756.8 976,755.8 977,756.2 978,757.2 979,757.5 980,757.1 981,757.1 982,757.6 983,758.9 984,758.5 985,759.8 986,759.7 987,760.3 988,758.4 989,758.9 990,758.7 991,759.9 992,759.8 993,759.3 994,760.7 995,759.7 996,760.4 997,760.4 998,762.1 999,761.2 1000,760.9 1001,760.4 1002,761.7 1003,762.4 1004,762.7 1005,763.6 1006,763.4 1007,761.9 1008,761.7 1009,763.7 1010,763.9 1011,763.2 1012,764.3 1013,763.6 1014,762.9 1015,762.7 1016,762.3 1017,764.3 1018,765.2 1019,765.4 1020,764.2 1021,764.9 1022,765.8 1023,765.5 1024,765.0 1025,764.6 1026,765.0 1027,764.0 1028,764.2 1029,765.8 1030,766.8 1031,765.6 1032,765.3 1033,765.2 1034,765.6 1035,766.7 1036,765.8 1037,767.4 1038,765.1 1039,765.6 1040,766.3 1041,766.1 1042,767.5 1043,767.5 1044,767.9 1045,767.0 1046,765.4 1047,767.1 1048,767.1 1049,767.0 1050,766.4 1051,767.8 1052,768.5 1053,766.1 1054,767.9 1055,767.0 1056,767.5 1057,768.8 1058,769.0 1059,768.1 1060,766.9 1061,769.1 1062,766.9 1063,767.6 1064,769.0 1065,767.5 1066,767.5 1067,769.6 1068,769.6 1069,767.8 1070,768.1 1071,767.8 1072,767.4 1073,767.8 1074,770.0 1075,767.4 1076,767.9 1077,767.9 1078,767.6 1079,768.9 1080,769.6 1081,770.0 1082,769.4 1083,770.0 1084,767.6 1085,768.5 1086,770.6 1087,768.0 1088,768.6 1089,769.3 1090,768.7 1091,769.6 1092,768.1 1093,768.7 1094,770.9 1095,768.5 1096,770.9 1097,768.7 1098,771.2 1099,770.3 1100,770.2 1101,768.8 1102,768.5 1103,770.7 1104,769.0 1105,769.0 1106,771.0 1107,771.2 1108,768.7 1109,771.5 1110,770.2 1111,769.8 1112,769.0 1113,769.9 1114,771.7 1115,769.6 1116,769.2 1117,769.3 1118,769.3 1119,770.0 1120,771.7 1121,769.2 1122,769.6 1123,771.8 1124,772.0 1125,772.0 1126,769.8 1127,770.2 1128,772.0 1129,770.6 1130,771.3 1131,770.2 1132,769.3 1133,770.3 1134,771.6 1135,771.7 1136,771.1 1137,770.8 1138,771.0 1139,770.7 1140,771.0 1141,772.0 1142,770.1 1143,771.3 1144,772.0 1145,772.0 1146,770.1 1147,772.0 1148,772.0 1149,770.1 1150,770.4 1151,770.3 1152,769.8 1153,772.0 1154,770.9 1155,772.0 1156,770.1 1157,769.8 1158,772.0 1159,772.0 1160,772.0 1161,771.9 1162,771.4 1163,772.0 1164,770.2 1165,771.5 1166,771.2 1167,770.4 1168,771.7 1169,770.9 1170,771.5 1171,771.1 1172,771.0 1173,771.1 1174,771.8 1175,772.0 1176,772.0 1177,772.0 1178,772.0 1179,771.0 1180,772.0 1181,770.9 1182,770.5 1183,771.6 1184,772.0 1185,771.2 1186,772.0 1187,771.0 1188,772.0 1189,771.6 1190,771.7 1191,771.8 1192,772.0 1193,772.0 1194,771.9 1195,771.6 1196,772.0 1197,770.5 1198,771.6 1199,772.0 1200,772.0 1201,770.5 1202,772.0 1203,771.5 1204,772.0 1205,771.5 1206,771.0 1207,772.0 1208,772.0 1209,771.7 1210,772.0 1211,772.0 1212,771.5 1213,771.3 1214,772.0 1215,771.6 1216,771.6 1217,772.0 1218,772.0 1219,772.0 1220,770.9 1221,771.2 1222,771.6 1223,772.0 1224,770.9 1225,770.8 1226,771.5 1227,771.4 1228,770.6 1229,772.0 1230,772.0 1231,772.0 1232,772.0 1233,772.0 1234,772.0 1235,772.0 1236,771.9 1237,772.0 1238,771.0 1239,772.0 1240,771.7 1241,772.0 1242,772.0 1243,771.5 1244,771.2 1245,772.0 1246,772.0 1247,770.9 1248,770.7 1249,771.7 1250,770.7 1251,772.0 1252,771.2 1253,771.5 1254,771.8 1255,772.0 1256,772.0 1257,772.0 1258,772.0 1259,772.0 1260,771.0 1261,772.0 1262,772.0 1263,771.0 1264,772.0 1265,772.0 1266,772.0 1267,770.9 1268,770.8 1269,772.0 1270,772.0 1271,772.0 1272,772.0 1273,771.7 1274,772.0 1275,772.0 1276,772.0 1277,771.4 1278,771.9 1279,771.0 1280,772.0 1281,770.9 1282,772.0 1283,772.0 1284,772.0 1285,771.0 1286,771.5 1287,772.0 1288,772.0 1289,772.0 1290,771.7 1291,772.0 1292,772.0 1293,772.0 1294,771.4 1295,771.7 1296,772.0 1297,771.2 1298,772.0 1299,772.0 1300,771.9 1301,772.0 1302,772.0 1303,772.0 1304,772.0 1305,771.5 1306,771.0 1307,772.0 1308,771.8 1309,771.4 1310,772.0 1311,771.5 1312,772.0 1313,772.0 1314,771.2 1315,772.0 1316,772.0 1317,771.5 1318,771.4 1319,771.0 1320,772.0 1321,772.0 1322,772.0 1323,772.0 1324,771.1 1325,772.0 1326,772.0 1327,771.4 1328,771.6 1329,771.7 1330,772.0 1331,771.9 1332,771.2 1333,771.6 1334,772.0 1335,772.0 1336,771.6 1337,772.0 1338,771.5 1339,772.0 1340,772.0 1341,771.4 1342,772.0 1343,772.0 1344,772.0 1345,772.0 1346,772.0 1347,772.0 1348,771.1 1349,772.0 1350,772.0 1351,772.0 1352,772.0 1353,771.7 1354,772.0 1355,772.0 1356,771.6 1357,772.0 1358,772.0 1359,772.0 1360,772.0 1361,772.0 1362,771.5 1363,772.0 1364,771.9 1365,772.0" fill="none" stroke="#20a020" stroke-width="1.6"/><polyline points="943,719.0 944,722.4 945,725.4 946,728.2 947,730.7 948,733.0 949,735.0 950,736.9 951,738.6 952,740.2 953,741.6 954,742.9 955,744.0 956,745.1 957,746.1 958,747.0 959,747.9 960,748.7 961,749.5 962,749.7 963,750.7 964,751.6 965,751.8 966,752.4 967,753.2 968,753.2 969,753.7 970,754.2 971,754.9 972,754.4 973,754.5 974,755.9 975,755.9 976,755.8 977,757.0 978,757.3 979,757.0 980,758.1 981,758.1 982,758.1 983,757.5 984,757.1 985,758.7 986,759.1 987,758.4 988,758.9 989,759.3 990,758.8 991,760.0 992,759.9 993,759.6 994,759.1 995,760.4 996,759.9 997,761.2 998,759.9 999,760.6 1000,760.2 1001,761.0 1002,761.6 1003,760.4 1004,760.3 1005,761.8 1006,761.1 1007,762.1 1008,761.2 1009,761.2 1010,762.6 1011,763.9 1012,763.9 1013,763.0 1014,762.7 1015,761.9 1016,762.6 1017,762.8 1018,764.8 1019,762.5 1020,765.1 1021,763.8 1022,763.8 1023,763.4 1024,765.6 1025,763.4 1026,764.6 1027,764.6 1028,763.7 1029,763.9 1030,766.3 1031,765.8 1032,765.7 1033,766.3 1034,764.0 1035,765.9 1036,766.2 1037,764.7 1038,765.5 1039,767.1 1040,765.2 1041,766.6 1042,764.9 1043,766.5 1044,765.4 1045,766.2 1046,765.9 1047,767.4 1048,767.2 1049,766.5 1050,767.1 1051,766.4 1052,767.6 1053,766.1 1054,767.0 1055,767.2 1056,766.7 1057,765.7 1058,766.2 1059,767.6 1060,766.4 1061,768.1 1062,767.4 1063,768.8 1064,768.6 1065,768.3 1066,767.3 1067,766.3 1068,767.9 1069,768.6 1070,769.2 1071,767.1 1072,767.0 1073,769.5 1074,768.8 1075,768.1 1076,768.9 1077,767.2 1078,768.5 1079,768.9 1080,768.7 1081,767.5 1082,767.4 1083,768.9 1084,769.8 1085,767.6 1086,767.2 1087,767.5 1088,769.7 1089,768.5 1090,768.8 1091,770.4 1092,769.3 1093,768.3 1094,769.7 1095,767.6 1096,768.5 1097,769.8 1098,768.2 1099,767.8 1100,769.3 1101,768.8 1102,770.8 1103,768.2 1104,770.3 1105,769.1 1106,770.4 1107,769.4 1108,770.1 1109,769.1 1110,768.8 1111,769.5 1112,770.6 1113,769.3 1114,769.0 1115,769.5 1116,768.6 1117,769.3 1118,770.1 1119,770.1 1120,770.2 1121,769.3 1122,768.6 1123,768.6 1124,769.6 1125,769.2 1126,770.3 1127,769.4 1128,770.9 1129,770.5 1130,770.7 1131,770.9 1132,770.3 1133,770.1 1134,769.7 1135,769.0 1136,771.2 1137,770.4 1138,769.2 1139,771.7 1140,770.7 1141,770.8 1142,770.3 1143,769.4 1144,772.0 1145,769.6 1146,770.2 1147,772.0 1148,769.5 1149,770.6 1150,770.6 1151,769.9 1152,772.0 1153,770.4 1154,769.3 1155,770.7 1156,769.3 1157,771.4 1158,771.9 1159,772.0 1160,769.5 1161,771.4 1162,770.3 1163,770.8 1164,770.3 1165,770.3 1166,769.8 1167,771.3 1168,769.7 1169,772.0 1170,769.6 1171,772.0 1172,770.1 1173,769.8 1174,771.8 1175,771.1 1176,771.9 1177,771.1 1178,771.5 1179,769.8 1180,771.6 1181,771.2 1182,772.0 1183,769.7 1184,769.9 1185,771.7 1186,772.0 1187,771.0 1188,771.8 1189,771.4 1190,770.9 1191,771.1 1192,771.5 1193,769.8 1194,770.7 1195,772.0 1196,770.6 1197,771.2 1198,770.6 1199,770.9 1200,771.8 1201,772.0 1202,772.0 1203,771.3 1204,770.5 1205,770.9 1206,770.1 1207,770.6 1208,771.6 1209,771.7 1210,770.6 1211,770.5 1212,770.2 1213,770.5 1214,771.4 1215,770.7 1216,772.0 1217,771.7 1218,771.0 1219,771.3 1220,770.1 1221,772.0 1222,772.0 1223,771.1 1224,772.0 1225,770.8 1226,770.7 1227,770.7 1228,770.6 1229,771.9 1230,772.0 1231,772.0 1232,770.4 1233,772.0 1234,771.5 1235,771.2 1236,771.6 1237,771.4 1238,770.7 1239,771.3 1240,772.0 1241,772.0 1242,772.0 1243,770.7 1244,772.0 1245,772.0 1246,772.0 1247,772.0 1248,770.6 1249,772.0 1250,772.0 1251,770.5 1252,772.0 1253,772.0 1254,771.1 1255,772.0 1256,772.0 1257,771.5 1258,770.6 1259,770.8 1260,772.0 1261,771.5 1262,771.2 1263,771.5 1264,772.0 1265,771.0 1266,770.3 1267,772.0 1268,771.2 1269,771.4 1270,772.0 1271,771.1 1272,770.5 1273,772.0 1274,771.0 1275,770.9 1276,772.0 1277,771.0 1278,772.0 1279,771.3 1280,771.2 1281,770.9 1282,771.9 1283,772.0 1284,771.5 1285,771.8 1286,771.2 1287,772.0 1288,772.0 1289,772.0 1290,772.0 1291,770.5 1292,771.1 1293,770.9 1294,770.8 1295,772.0 1296,772.0 1297,772.0 1298,772.0 1299,770.7 1300,771.6 1301,770.5 1302,772.0 1303,771.1 1304,771.2 1305,772.0 1306,770.9 1307,772.0 1308,771.3 1309,772.0 1310,770.7 1311,772.0 1312,771.6 1313,771.4 1314,772.0 1315,772.0 1316,771.1 1317,770.7 1318,772.0 1319,770.4 1320,772.0 1321,771.4 1322,770.9 1323,771.4 1324,770.7 1325,771.3 1326,772.0 1327,771.6 1328,771.4 1329,771.3 1330,771.8 1331,772.0 1332,771.7 1333,772.0 1334,771.8 1335,770.8 1336,770.9 1337,772.0 1338,771.8 1339,771.5 1340,772.0 1341,772.0 1342,771.5 1343,771.5 1344,771.5 1345,770.4 1346,772.0 1347,771.8 1348,771.9 1349,771.8 1350,771.8 1351,772.0 1352,771.0 1353,772.0 1354,770.8 1355,772.0 1356,770.9 1357,772.0 1358,771.2 1359,770.7 1360,772.0 1361,772.0 1362,772.0 1363,772.0 1364,772.0 1365,770.6" fill="none" stroke="#ffffff" stroke-width="1.6"/><path d="M1366 772V756" stroke="#fff" stroke-width="1.5"/></svg>
<div class="a" style="left:1368px;top:684px;width:43px;height:89px;background:#000"></div>
<div class="a" style="left:1368px;top:684px;width:20px;height:20px;background:#000;border:1.5px solid #7ab4e6"></div>
<svg class="a" style="left:1368px;top:684px" width="20" height="20"><circle cx="10" cy="10" r="6.5" fill="none" stroke="#6f0" stroke-width="2"/><path d="M10 5V12" stroke="#6f0" stroke-width="2"/></svg>
<div class="a" style="left:1390px;top:684px;width:20px;height:20px;background:#f6f6f6;border:1px solid #ccc"></div>
<svg class="a" style="left:1390px;top:684px" width="20" height="20"><rect x="3.5" y="3.5" width="13" height="13" rx="2" fill="#000"/><path d="M10 4.5A5.5 5.5 0 0 1 10 15.5Z" fill="#fff"/></svg>
<div class="a" style="left:1368px;top:706px;width:20px;height:20px;background:#e6e6e6;border:1px solid #c8c8c8"></div>
<svg class="a" style="left:1368px;top:706px" width="20" height="20"><path d="M12 3L5 11H10L8 17L15 9H10Z" stroke="#222" stroke-width="1.5" fill="none" stroke-linejoin="round"/></svg>
<div class="a" style="left:1390px;top:706px;width:20px;height:20px;background:#e6e6e6;border:1px solid #c8c8c8"></div>
<svg class="a" style="left:1390px;top:706px" width="20" height="20"><path d="M5 10V7A5 5 0 0 1 15 7V10" stroke="#222" stroke-width="2" fill="none"/><rect x="4" y="10" width="12" height="8" fill="#e0e0e0" stroke="#222"/></svg>
<div class="a" style="left:1368px;top:728px;width:20px;height:20px;background:#e6e6e6;border:1px solid #c8c8c8"></div>
<svg class="a" style="left:1368px;top:728px" width="20" height="20"><path d="M5 7A6 6 0 1 1 4.5 13" stroke="#222" stroke-width="1.8" fill="none"/><path d="M2 4L7 3.5L5.5 8.5Z" fill="#222"/></svg>
<div class="a" style="left:1368px;top:750px;width:20px;height:20px;background:#e6e6e6;border:1px solid #c8c8c8"></div>
<svg class="a" style="left:1368px;top:750px" width="20" height="20"><path d="M3 3H14L17 6V17H3Z" fill="none" stroke="#1050a8" stroke-width="2.2"/><rect x="11" y="4" width="2" height="3" fill="#1050a8"/><rect x="6" y="11" width="8" height="5" fill="none" stroke="#1050a8" stroke-width="1.6"/></svg>
<div class="a" style="left:0px;top:807px;width:1429px;height:3px;background:#6b6b6b"></div>
<div class="a" style="left:0px;top:810px;width:1429px;height:24px;background:#f0f0f0"></div>
<div class="a" style="left:2px;top:811px;width:517px;height:22px;border:1px solid #c9c9c9;background:#f0f0f0"></div>
<div class="a" style="left:522px;top:811px;width:280px;height:22px;border:1px solid #c9c9c9;background:#f0f0f0"></div>
<div class="a" style="left:806px;top:811px;width:226px;height:22px;border:1px solid #c9c9c9;background:#f0f0f0"></div>
<div class="a" style="left:1035px;top:811px;width:199px;height:22px;border:1px solid #c9c9c9;background:#f0f0f0"></div>
<div class="t" style="left:5.5px;top:816.39px;font-size:13.6px;color:#000;">Previewing : 2182 frames (0 dropped) in 2:38:56,1, exposure 20,0s , last frame 20,0s</div>
<div class="t" style="left:526.0px;top:816.39px;font-size:13.6px;color:#000;">Memory: 4 of 155 frames used, Disk: 111 GB</div>
<div class="a" style="left:807px;top:812px;width:223px;height:20px;overflow:hidden"><div class="t" style="left:3px;top:4.39px;font-size:13.6px;transform:scaleX(0.972);transform-origin:0 0">Cooler: 3%, Temp: 0,0°C, Target: 0,0°C</div></div>
<div class="t" style="left:1039.0px;top:816.39px;font-size:13.6px;color:#000;transform:scaleX(0.991);transform-origin:0 0;">77 Stacked, 0 Ignored, 25m 43s</div>
<div class="t" style="left:1241.0px;top:816.39px;font-size:13.6px;color:#000;transform:scaleX(0.939);transform-origin:0 0;">Frame :</div>
<div class="a" style="left:1288px;top:814px;width:90px;height:17px;background:#e6e6e6;border:1px solid #bcbcbc"></div>
<div class="a" style="left:1289px;top:815px;width:36px;height:15px;background:#06b025"></div>
<div class="t" style="left:1380.5px;top:816.39px;font-size:13.6px;color:#000;transform:scaleX(1.047);transform-origin:0 0;">00:09/0</div>
</body></html>
